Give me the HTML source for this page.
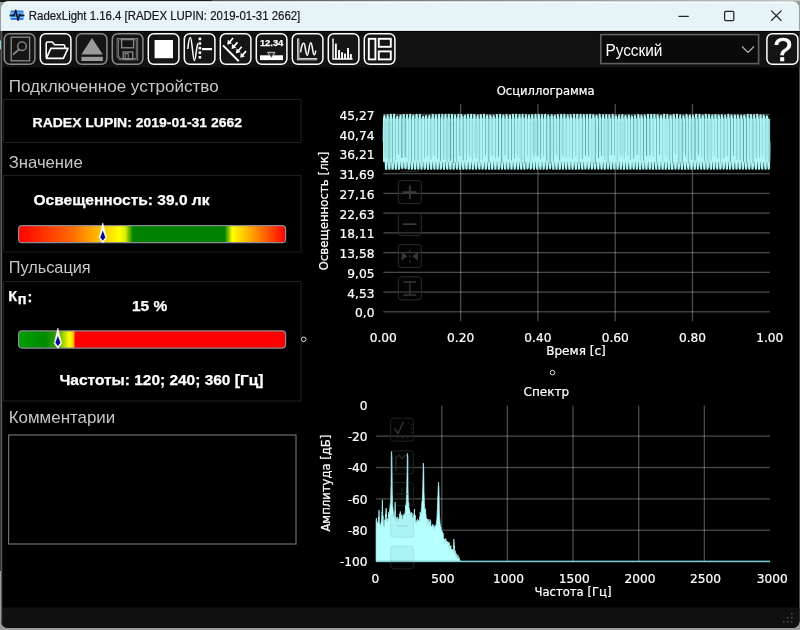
<!DOCTYPE html>
<html lang="ru"><head><meta charset="utf-8"><title>RadexLight 1.16.4 [RADEX LUPIN: 2019-01-31 2662]</title>
<style>
html,body{margin:0;padding:0;width:800px;height:630px;overflow:hidden;background:#9b9b9b}
svg{will-change:transform}
svg text{white-space:pre}
svg text.c{stroke:#fff;stroke-width:0.22px}
svg text[font-weight=bold]{stroke:#fff;stroke-width:0.25px}
</style></head><body>
<svg width="800" height="630" viewBox="0 0 800 630" style="position:absolute;left:0;top:0;display:block">
<rect x="0" y="0" width="800" height="630" fill="#9b9b9b"/>
<linearGradient id="tg" x1="0" x2="1" y1="0" y2="0"><stop offset="0.25" stop-color="#555"/><stop offset="1" stop-color="#c4c4c4"/></linearGradient>
<rect x="0" y="0" width="800" height="1.3" fill="url(#tg)"/>
<rect x="0" y="0" width="212" height="2" fill="#1c1c1c"/>
<rect x="0" y="31" width="2" height="540" fill="#3a3a3a"/>
<rect x="0" y="40.5" width="2" height="9" fill="#7fd6d6"/>
<clipPath id="wc"><rect x="1" y="1.3" width="798.5" height="626.7" rx="7" ry="7"/></clipPath>
<g clip-path="url(#wc)">
<rect x="0" y="0" width="800" height="630" fill="#000"/>
<rect x="0" y="0" width="800" height="31" fill="#e6f4f7"/>
<rect x="0" y="1.4" width="800" height="1.3" fill="#ffffff"/>
<rect x="0" y="29.6" width="800" height="1.2" fill="#ffffff"/>
<rect x="0" y="31" width="800" height="36.5" fill="#111"/>
<rect x="0" y="30.9" width="800" height="1.2" fill="#000"/>
<rect x="0" y="607.5" width="800" height="23" fill="#101010"/>
<rect x="1" y="31" width="1.2" height="597" fill="#5a5a5a"/>
</g>
<g>
<rect x="10.5" y="10.5" width="13" height="9.5" rx="1" fill="#2f7fe6"/>
<rect x="11" y="12.5" width="12" height="1.2" fill="#8fc0ff"/>
<rect x="11" y="16.8" width="12" height="1.2" fill="#8fc0ff"/>
<path d="M9.5 15.5 H14 L15.8 10.2 L18 20.3 L19.8 14.2 L21 15.5 H24.5" fill="none" stroke="#111827" stroke-width="1.5" stroke-linejoin="round"/>
</g>
<text x="28.8" y="20.2" font-size="12" fill="#151515" font-weight="normal" text-anchor="start" font-family='"Liberation Sans", "DejaVu Sans", sans-serif' textLength="271.5" lengthAdjust="spacingAndGlyphs" stroke="#151515" stroke-width="0.2">RadexLight 1.16.4 [RADEX LUPIN: 2019-01-31 2662]</text>
<path d="M678.4 16.4 H688.8" stroke="#222" stroke-width="1.25"/>
<rect x="724.6" y="11.4" width="9.2" height="9.2" rx="1.2" fill="none" stroke="#222" stroke-width="1.25"/>
<path d="M771.2 10.6 L781.4 20.8 M781.4 10.6 L771.2 20.8" stroke="#222" stroke-width="1.25"/>
<rect x="4.3" y="33.7" width="30.6" height="30.6" rx="5.5" fill="#151515" stroke="#8c8c8c" stroke-width="1.5"/>
<rect x="40.300000000000004" y="33.7" width="30.6" height="30.6" rx="5.5" fill="#151515" stroke="#fff" stroke-width="1.5"/>
<rect x="76.3" y="33.7" width="30.6" height="30.6" rx="5.5" fill="#151515" stroke="#8c8c8c" stroke-width="1.5"/>
<rect x="112.3" y="33.7" width="30.6" height="30.6" rx="5.5" fill="#151515" stroke="#8c8c8c" stroke-width="1.5"/>
<rect x="148.29999999999998" y="33.7" width="30.6" height="30.6" rx="5.5" fill="#151515" stroke="#fff" stroke-width="1.5"/>
<rect x="184.29999999999998" y="33.7" width="30.6" height="30.6" rx="5.5" fill="#151515" stroke="#fff" stroke-width="1.5"/>
<rect x="220.29999999999998" y="33.7" width="30.6" height="30.6" rx="5.5" fill="#151515" stroke="#fff" stroke-width="1.5"/>
<rect x="256.3" y="33.7" width="30.6" height="30.6" rx="5.5" fill="#151515" stroke="#fff" stroke-width="1.5"/>
<rect x="292.3" y="33.7" width="30.6" height="30.6" rx="5.5" fill="#151515" stroke="#fff" stroke-width="1.5"/>
<rect x="328.3" y="33.7" width="30.6" height="30.6" rx="5.5" fill="#151515" stroke="#fff" stroke-width="1.5"/>
<rect x="364.3" y="33.7" width="30.6" height="30.6" rx="5.5" fill="#151515" stroke="#fff" stroke-width="1.5"/>
<g transform="translate(3.6,33)">
<rect x="7.6" y="4.2" width="18.4" height="23.6" fill="none" stroke="#8c8c8c" stroke-width="1.3"/>
<circle cx="18.4" cy="13.2" r="4.3" fill="none" stroke="#8c8c8c" stroke-width="1.4"/>
<path d="M15.4 16.4 L10 21.2" stroke="#8c8c8c" stroke-width="1.8" stroke-linecap="round"/>
</g>
<g transform="translate(39.6,33)">
<path d="M6.6 24.5 V10.6 Q6.6 9 8.2 9 H12.6 L15 11.8 H23.6 Q25.2 11.8 25.2 13.4 V15.2" fill="none" stroke="#fff" stroke-width="1.6" stroke-linejoin="round"/>
<path d="M6.8 25.4 L11.2 15.4 H28.4 L23.8 25.4 Z" fill="none" stroke="#fff" stroke-width="1.6" stroke-linejoin="round"/>
</g>
<g transform="translate(75.6,33)">
<path d="M16.4 5 L27.2 21.4 H5.8 Z" fill="#9a9a9a"/>
<rect x="5.8" y="23.8" width="21.4" height="4.2" fill="#9a9a9a"/>
</g>
<g transform="translate(111.6,33)">
<path d="M6.2 6.2 H25.4 V26.2 H8.8 L6.2 23.6 Z" fill="none" stroke="#8c8c8c" stroke-width="2.3" stroke-linejoin="miter"/>
<path d="M6.2 6.2 H25.4 V26.2 H8.8 L6.2 23.6 Z" fill="none" stroke="#151515" stroke-width="0.7"/>
<rect x="10" y="6.2" width="12" height="8.6" fill="none" stroke="#8c8c8c" stroke-width="1.3"/>
<rect x="11.6" y="19" width="9.6" height="7.2" fill="none" stroke="#8c8c8c" stroke-width="1.3"/>
<rect x="13.6" y="20.6" width="3" height="5.6" fill="none" stroke="#8c8c8c" stroke-width="1"/>
</g>
<g transform="translate(147.6,33)">
<rect x="7" y="7" width="18.4" height="18.2" fill="#fff"/>
</g>
<g transform="translate(183.6,33)">
<path d="M4.2 16 C5 8 6 4.4 6.8 4.4 C8.4 4.4 9.2 27.6 10.8 27.6 C12.2 27.6 12.8 12 14.6 10.4" fill="none" stroke="#fff" stroke-width="1.5"/>
<rect x="15" y="4.6" width="2.6" height="2.6" fill="#fff"/>
<rect x="15" y="9.2" width="2.6" height="2.6" fill="#fff"/>
<rect x="15" y="13.8" width="2.6" height="2.6" fill="#fff"/>
<rect x="15" y="18.4" width="2.6" height="2.6" fill="#fff"/>
<rect x="15" y="23" width="2.6" height="2.6" fill="#fff"/>
<rect x="18.4" y="15" width="10" height="2.2" fill="#fff"/>
</g>
<g transform="translate(219.6,33)">
<path d="M3.4 12.4 L19.2 28.2" stroke="#fff" stroke-width="2"/>
<path d="M13.50 5.00 L9.80 9.20" stroke="#fff" stroke-width="1.7"/>
<path d="M7.60 11.70 L8.30 6.70 L12.30 10.30 Z" fill="#fff"/>
<path d="M17.83 9.37 L14.13 13.57" stroke="#fff" stroke-width="1.7"/>
<path d="M11.93 16.07 L12.63 11.07 L16.63 14.67 Z" fill="#fff"/>
<path d="M22.16 13.74 L18.46 17.94" stroke="#fff" stroke-width="1.7"/>
<path d="M16.26 20.44 L16.96 15.44 L20.96 19.04 Z" fill="#fff"/>
<path d="M26.49 18.11 L22.79 22.31" stroke="#fff" stroke-width="1.7"/>
<path d="M20.59 24.81 L21.29 19.81 L25.29 23.41 Z" fill="#fff"/>
</g>
<g transform="translate(255.6,33)">
<text x="16" y="12.9" font-size="9" fill="#fff" font-weight="bold" text-anchor="middle" font-family='"Liberation Sans", "DejaVu Sans", sans-serif' textLength="23.4" lengthAdjust="spacingAndGlyphs">12.34</text>
<rect x="4.4" y="22.3" width="23" height="4.8" fill="#fff"/>
<path d="M12 19.3 H19.4 L15.7 25 Z" fill="#333" stroke="#ddd" stroke-width="0.9"/>
</g>
<g transform="translate(291.6,33)">
<path d="M6.6 5.6 V26.2 H25.6" fill="none" stroke="#fff" stroke-width="2.2"/>
<path d="M6.6 5.6 V26.2 H25.6" fill="none" stroke="#151515" stroke-width="0.6"/>
<path d="M9 19.4 C10 11 11.4 10 12.4 10.4 C13.8 11 14 22.2 15.6 22.2 C17.2 22.2 17.4 9.8 19.2 9.8 C20.8 9.8 21 21.8 22.6 21.8 C23.4 21.8 23.8 19.6 24.2 17.6" fill="none" stroke="#fff" stroke-width="1.5"/>
</g>
<g transform="translate(327.6,33)">
<path d="M5.4 5.4 V26 H25" fill="none" stroke="#fff" stroke-width="1.4"/>
<rect x="7.299999999999999" y="10.6" width="1.9" height="15.4" fill="#fff"/>
<rect x="10.5" y="17" width="1.9" height="9" fill="#fff"/>
<rect x="13.5" y="19.2" width="1.9" height="6.800000000000001" fill="#fff"/>
<rect x="16.5" y="20.6" width="1.9" height="5.399999999999999" fill="#fff"/>
<rect x="19.5" y="15" width="1.9" height="11" fill="#fff"/>
<rect x="22.3" y="21" width="1.9" height="5" fill="#fff"/>
</g>
<g transform="translate(363.6,33)">
<rect x="5.2" y="5.8" width="6.6" height="20.6" fill="none" stroke="#fff" stroke-width="1.9"/>
<rect x="15.2" y="5.8" width="12" height="8" fill="none" stroke="#fff" stroke-width="1.9"/>
<rect x="15.2" y="18.4" width="12" height="8" fill="none" stroke="#fff" stroke-width="1.9"/>
</g>
<rect x="600.8" y="34.6" width="157.8" height="29" fill="#0a0a0a" stroke="#606060" stroke-width="1.6"/>
<text x="605.4" y="56.2" font-size="17" fill="#fff" font-weight="normal" text-anchor="start" font-family='"Liberation Sans", "DejaVu Sans", sans-serif' textLength="57" lengthAdjust="spacingAndGlyphs">Русский</text>
<path d="M742 46.5 L748 52.5 L754 46.5" fill="none" stroke="#b4b4b4" stroke-width="1.2"/>
<rect x="766.9" y="33.7" width="31" height="30.6" rx="5.5" fill="#151515" stroke="#fff" stroke-width="1.5"/>
<text x="782.8" y="61.2" font-size="33.5" fill="#fff" font-weight="normal" text-anchor="middle" font-family='"Liberation Sans", "DejaVu Sans", sans-serif' textLength="18.6" lengthAdjust="spacingAndGlyphs" stroke="#fff" stroke-width="0.7">?</text>
<text x="8.7" y="92.4" font-size="17" fill="#c6c6c6" font-weight="normal" text-anchor="start" font-family='"Liberation Sans", "DejaVu Sans", sans-serif' textLength="210" lengthAdjust="spacingAndGlyphs">Подключенное устройство</text>
<rect x="3.5" y="99.5" width="297.5" height="43" fill="none" stroke="#1f1f1f" stroke-width="1"/>
<text x="32.6" y="126.8" font-size="13.6" fill="#fff" font-weight="bold" text-anchor="start" font-family='"Liberation Sans", "DejaVu Sans", sans-serif' textLength="209.4" lengthAdjust="spacingAndGlyphs">RADEX LUPIN: 2019-01-31 2662</text>
<text x="8.7" y="168.2" font-size="17" fill="#c6c6c6" font-weight="normal" text-anchor="start" font-family='"Liberation Sans", "DejaVu Sans", sans-serif' textLength="74" lengthAdjust="spacingAndGlyphs">Значение</text>
<rect x="3.5" y="175.5" width="297.5" height="76.5" fill="none" stroke="#1f1f1f" stroke-width="1"/>
<text x="33.5" y="205" font-size="14.2" fill="#fff" font-weight="bold" text-anchor="start" font-family='"Liberation Sans", "DejaVu Sans", sans-serif' textLength="176" lengthAdjust="spacingAndGlyphs">Освещенность: 39.0 лк</text>
<text x="8.7" y="273.4" font-size="17" fill="#c6c6c6" font-weight="normal" text-anchor="start" font-family='"Liberation Sans", "DejaVu Sans", sans-serif' textLength="82" lengthAdjust="spacingAndGlyphs">Пульсация</text>
<rect x="3.5" y="281.5" width="297.5" height="119.5" fill="none" stroke="#1f1f1f" stroke-width="1"/>
<text x="8.3" y="301" font-size="14.5" fill="#fff" font-weight="bold" text-anchor="start" font-family='"Liberation Sans", "DejaVu Sans", sans-serif'>К</text>
<text x="17.7" y="304.2" font-size="14.5" fill="#fff" font-weight="bold" text-anchor="start" font-family='"Liberation Sans", "DejaVu Sans", sans-serif'>п</text>
<text x="27.6" y="302.4" font-size="14.5" fill="#fff" font-weight="bold" text-anchor="start" font-family='"Liberation Sans", "DejaVu Sans", sans-serif'>:</text>
<text x="132" y="311" font-size="14.5" fill="#fff" font-weight="bold" text-anchor="start" font-family='"Liberation Sans", "DejaVu Sans", sans-serif' textLength="35.2" lengthAdjust="spacingAndGlyphs">15 %</text>
<text x="59.5" y="384.8" font-size="14.5" fill="#fff" font-weight="bold" text-anchor="start" font-family='"Liberation Sans", "DejaVu Sans", sans-serif' textLength="203.8" lengthAdjust="spacingAndGlyphs">Частоты: 120; 240; 360 [Гц]</text>
<text x="8.7" y="423" font-size="17" fill="#c6c6c6" font-weight="normal" text-anchor="start" font-family='"Liberation Sans", "DejaVu Sans", sans-serif' textLength="106.6" lengthAdjust="spacingAndGlyphs">Комментарии</text>
<rect x="8.6" y="435" width="287.4" height="109" fill="#000" stroke="#6f6f6f" stroke-width="1.2"/>
<defs>
<linearGradient id="g1" x1="0" x2="1" y1="0" y2="0">
<stop offset="0" stop-color="#ff0000"/><stop offset="0.2" stop-color="#ff6a00"/><stop offset="0.378" stop-color="#ffff00"/><stop offset="0.40" stop-color="#d8ee00"/><stop offset="0.428" stop-color="#008200"/>
<stop offset="0.772" stop-color="#008200"/><stop offset="0.80" stop-color="#ffff00"/><stop offset="0.89" stop-color="#ff8c00"/><stop offset="1" stop-color="#ff0000"/>
</linearGradient>
<linearGradient id="g2" x1="0" x2="1" y1="0" y2="0">
<stop offset="0" stop-color="#00a000"/><stop offset="0.1" stop-color="#008a00"/><stop offset="0.14" stop-color="#30a000"/><stop offset="0.19" stop-color="#ffff00"/><stop offset="0.205" stop-color="#ffd000"/><stop offset="0.212" stop-color="#ff0000"/>
<stop offset="1" stop-color="#ff0000"/>
</linearGradient>
</defs>
<rect x="18.6" y="225.7" width="267" height="17" rx="3.5" fill="url(#g1)" stroke="#8c8c96" stroke-width="1.2"/>
<rect x="18.6" y="330.9" width="267" height="17.2" rx="3.5" fill="url(#g2)" stroke="#8c8c96" stroke-width="1.2"/>
<path d="M102.8 223 L106.5 238.0 L102.8 242.8 L99.1 238.0 Z" fill="#fff" stroke="#fff" stroke-width="0.6" stroke-linejoin="round"/>
<path d="M102.8 231.3 L105.1 237.4 L102.8 240.3 L100.5 237.4 Z" fill="#00008b" stroke="#00008b" stroke-width="0.5" stroke-linejoin="round"/>
<path d="M57.9 328.2 L61.6 343.4 L57.9 348.2 L54.199999999999996 343.4 Z" fill="#fff" stroke="#fff" stroke-width="0.6" stroke-linejoin="round"/>
<path d="M57.9 336.6 L60.199999999999996 342.8 L57.9 345.7 L55.6 342.8 Z" fill="#00008b" stroke="#00008b" stroke-width="0.5" stroke-linejoin="round"/>
<circle cx="303.7" cy="339.3" r="2.3" fill="none" stroke="#ddd" stroke-width="1"/>
<circle cx="552.5" cy="372.6" r="2.3" fill="none" stroke="#ddd" stroke-width="1"/>
<rect x="383.3" y="311.15" width="386.49999999999994" height="1.3" fill="#ffffff" fill-opacity="0.29"/>
<text class="c" x="374.4" y="317.2" font-size="12.2" fill="#fff" font-weight="normal" text-anchor="end" font-family='"DejaVu Sans", "Liberation Sans", sans-serif'>0,0</text>
<rect x="383.3" y="291.42" width="386.49999999999994" height="1.3" fill="#ffffff" fill-opacity="0.29"/>
<text class="c" x="374.4" y="297.5" font-size="12.2" fill="#fff" font-weight="normal" text-anchor="end" font-family='"DejaVu Sans", "Liberation Sans", sans-serif'>4,53</text>
<rect x="383.3" y="271.69" width="386.49999999999994" height="1.3" fill="#ffffff" fill-opacity="0.29"/>
<text class="c" x="374.4" y="277.7" font-size="12.2" fill="#fff" font-weight="normal" text-anchor="end" font-family='"DejaVu Sans", "Liberation Sans", sans-serif'>9,05</text>
<rect x="383.3" y="251.96" width="386.49999999999994" height="1.3" fill="#ffffff" fill-opacity="0.29"/>
<text class="c" x="374.4" y="258.0" font-size="12.2" fill="#fff" font-weight="normal" text-anchor="end" font-family='"DejaVu Sans", "Liberation Sans", sans-serif'>13,58</text>
<rect x="383.3" y="232.23" width="386.49999999999994" height="1.3" fill="#ffffff" fill-opacity="0.29"/>
<text class="c" x="374.4" y="238.3" font-size="12.2" fill="#fff" font-weight="normal" text-anchor="end" font-family='"DejaVu Sans", "Liberation Sans", sans-serif'>18,11</text>
<rect x="383.3" y="212.50" width="386.49999999999994" height="1.3" fill="#ffffff" fill-opacity="0.29"/>
<text class="c" x="374.4" y="218.6" font-size="12.2" fill="#fff" font-weight="normal" text-anchor="end" font-family='"DejaVu Sans", "Liberation Sans", sans-serif'>22,63</text>
<rect x="383.3" y="192.77" width="386.49999999999994" height="1.3" fill="#ffffff" fill-opacity="0.29"/>
<text class="c" x="374.4" y="198.8" font-size="12.2" fill="#fff" font-weight="normal" text-anchor="end" font-family='"DejaVu Sans", "Liberation Sans", sans-serif'>27,16</text>
<rect x="383.3" y="173.04" width="386.49999999999994" height="1.3" fill="#ffffff" fill-opacity="0.29"/>
<text class="c" x="374.4" y="179.1" font-size="12.2" fill="#fff" font-weight="normal" text-anchor="end" font-family='"DejaVu Sans", "Liberation Sans", sans-serif'>31,69</text>
<rect x="383.3" y="153.31" width="386.49999999999994" height="1.3" fill="#ffffff" fill-opacity="0.29"/>
<text class="c" x="374.4" y="159.4" font-size="12.2" fill="#fff" font-weight="normal" text-anchor="end" font-family='"DejaVu Sans", "Liberation Sans", sans-serif'>36,21</text>
<rect x="383.3" y="133.58" width="386.49999999999994" height="1.3" fill="#ffffff" fill-opacity="0.29"/>
<text class="c" x="374.4" y="139.6" font-size="12.2" fill="#fff" font-weight="normal" text-anchor="end" font-family='"DejaVu Sans", "Liberation Sans", sans-serif'>40,74</text>
<rect x="383.3" y="113.85" width="386.49999999999994" height="1.3" fill="#ffffff" fill-opacity="0.29"/>
<text class="c" x="374.4" y="119.9" font-size="12.2" fill="#fff" font-weight="normal" text-anchor="end" font-family='"DejaVu Sans", "Liberation Sans", sans-serif'>45,27</text>
<text class="c" x="383.3" y="342.3" font-size="12.2" fill="#fff" font-weight="normal" text-anchor="middle" font-family='"DejaVu Sans", "Liberation Sans", sans-serif'>0.00</text>
<rect x="459.95" y="104" width="1.3" height="217.3" fill="#ffffff" fill-opacity="0.29"/>
<text class="c" x="460.6" y="342.3" font-size="12.2" fill="#fff" font-weight="normal" text-anchor="middle" font-family='"DejaVu Sans", "Liberation Sans", sans-serif'>0.20</text>
<rect x="537.25" y="104" width="1.3" height="217.3" fill="#ffffff" fill-opacity="0.29"/>
<text class="c" x="537.9" y="342.3" font-size="12.2" fill="#fff" font-weight="normal" text-anchor="middle" font-family='"DejaVu Sans", "Liberation Sans", sans-serif'>0.40</text>
<rect x="614.55" y="104" width="1.3" height="217.3" fill="#ffffff" fill-opacity="0.29"/>
<text class="c" x="615.2" y="342.3" font-size="12.2" fill="#fff" font-weight="normal" text-anchor="middle" font-family='"DejaVu Sans", "Liberation Sans", sans-serif'>0.60</text>
<rect x="691.85" y="104" width="1.3" height="217.3" fill="#ffffff" fill-opacity="0.29"/>
<text class="c" x="692.5" y="342.3" font-size="12.2" fill="#fff" font-weight="normal" text-anchor="middle" font-family='"DejaVu Sans", "Liberation Sans", sans-serif'>0.80</text>
<text class="c" x="769.8" y="342.3" font-size="12.2" fill="#fff" font-weight="normal" text-anchor="middle" font-family='"DejaVu Sans", "Liberation Sans", sans-serif'>1.00</text>
<text class="c" x="545.7" y="95" font-size="12.2" fill="#fff" font-weight="normal" text-anchor="middle" font-family='"DejaVu Sans", "Liberation Sans", sans-serif' textLength="98" lengthAdjust="spacingAndGlyphs">Осциллограмма</text>
<text class="c" x="576" y="354.6" font-size="12.2" fill="#fff" font-weight="normal" text-anchor="middle" font-family='"DejaVu Sans", "Liberation Sans", sans-serif' textLength="59.6" lengthAdjust="spacingAndGlyphs">Время [с]</text>
<text class="c" transform="translate(328.4 211) rotate(-90)" font-size="12.2" fill="#fff" text-anchor="middle" font-family='"DejaVu Sans", "Liberation Sans", sans-serif' textLength="118.8" lengthAdjust="spacingAndGlyphs">Освещенность [лк]</text>
<rect x="383.0" y="118.73" width="387.09999999999997" height="43.15" fill="#aef6f6"/>
<polyline points="383.70,141.67 383.81,127.63 383.91,121.80 384.02,120.40 384.13,117.29 384.24,116.61 384.34,116.89 384.45,115.69 384.56,117.30 384.66,116.97 384.77,118.94 384.88,120.25 384.99,121.19 385.09,122.68 385.20,128.43 385.31,141.93 385.41,154.75 385.52,158.13 385.63,162.07 385.74,164.88 385.84,165.21 385.95,168.85 386.06,167.83 386.16,168.85 386.27,168.85 386.38,168.85 386.49,166.89 386.59,163.16 386.70,161.47 386.81,155.60 386.91,140.85 387.02,127.05 387.13,122.07 387.24,120.43 387.34,118.54 387.45,117.03 387.56,115.27 387.66,115.90 387.77,116.57 387.88,116.57 387.99,117.94 388.09,119.70 388.20,120.23 388.31,123.01 388.41,128.12 388.52,141.02 388.63,155.02 388.74,158.32 388.84,161.68 388.95,165.16 389.06,165.20 389.16,168.85 389.27,168.85 389.38,168.47 389.49,168.85 389.59,168.04 389.70,167.60 389.81,163.55 389.91,159.94 390.02,155.62 390.13,140.23 390.24,127.20 390.34,121.68 390.45,119.04 390.56,117.18 390.66,116.37 390.77,114.85 390.88,114.81 390.99,116.16 391.09,116.37 391.20,118.96 391.31,118.65 391.41,120.61 391.52,122.24 391.63,126.60 391.74,141.77 391.84,155.38 391.95,158.86 392.06,163.52 392.16,164.71 392.27,167.32 392.38,168.85 392.49,168.85 392.59,168.44 392.70,168.85 392.81,168.67 392.91,166.68 393.02,163.02 393.13,161.73 393.24,155.95 393.34,141.08 393.45,125.71 393.56,121.36 393.66,118.33 393.77,117.97 393.88,116.48 393.99,116.11 394.09,114.81 394.20,114.89 394.31,117.71 394.41,118.66 394.52,119.88 394.63,121.69 394.74,123.57 394.84,127.21 394.95,141.83 395.06,156.38 395.16,159.51 395.27,162.62 395.38,164.43 395.49,165.27 395.59,167.35 395.70,168.73 395.81,168.83 395.91,168.45 396.02,168.85 396.13,165.35 396.24,163.25 396.34,159.65 396.45,155.04 396.56,141.49 396.66,126.98 396.77,123.23 396.88,118.94 396.99,118.53 397.09,117.39 397.20,116.50 397.31,116.60 397.41,116.51 397.52,117.97 397.63,119.12 397.74,120.09 397.84,122.04 397.95,123.89 398.06,128.69 398.16,140.23 398.27,154.78 398.38,160.22 398.49,162.92 398.59,165.00 398.70,166.81 398.81,168.84 398.91,167.86 399.02,167.85 399.13,168.85 399.24,168.05 399.34,167.48 399.45,165.03 399.56,161.05 399.66,156.43 399.77,140.35 399.88,127.60 399.99,123.44 400.09,118.11 400.20,117.31 400.31,117.18 400.41,115.63 400.52,116.95 400.63,116.01 400.74,115.54 400.84,116.86 400.95,118.66 401.06,121.62 401.16,123.88 401.27,128.32 401.38,140.50 401.49,155.00 401.59,158.57 401.70,162.72 401.81,165.33 401.91,165.64 402.02,166.58 402.13,167.85 402.24,168.34 402.34,168.08 402.45,167.38 402.56,167.11 402.66,163.94 402.77,161.01 402.88,157.05 402.99,142.45 403.09,127.29 403.20,122.83 403.31,118.78 403.41,116.19 403.52,116.39 403.63,114.81 403.73,114.81 403.84,114.90 403.95,117.15 404.06,118.54 404.16,119.89 404.27,121.79 404.38,124.30 404.48,127.12 404.59,140.16 404.70,154.19 404.81,159.35 404.91,161.88 405.02,163.82 405.13,167.54 405.23,167.43 405.34,167.70 405.45,168.40 405.56,168.26 405.66,168.07 405.77,167.23 405.88,163.23 405.98,161.07 406.09,155.03 406.20,139.98 406.31,126.99 406.41,122.45 406.52,118.12 406.63,116.80 406.73,117.12 406.84,116.71 406.95,116.63 407.06,115.03 407.16,115.99 407.27,118.74 407.38,118.32 407.48,119.74 407.59,123.12 407.70,127.84 407.81,141.08 407.91,156.05 408.02,160.57 408.13,161.04 408.23,164.21 408.34,166.38 408.45,166.72 408.56,168.85 408.66,168.17 408.77,168.06 408.88,168.77 408.98,167.04 409.09,164.53 409.20,161.31 409.31,155.59 409.41,141.84 409.52,126.93 409.63,123.16 409.73,118.21 409.84,117.77 409.95,116.37 410.06,115.52 410.16,114.81 410.27,116.30 410.38,115.70 410.48,117.81 410.59,119.09 410.70,120.94 410.81,124.79 410.91,127.60 411.02,142.04 411.13,156.38 411.23,158.52 411.34,163.13 411.45,164.67 411.56,165.87 411.66,167.71 411.77,168.85 411.88,168.85 411.98,168.77 412.09,167.27 412.20,167.42 412.31,163.83 412.41,161.29 412.52,156.40 412.63,140.50 412.73,126.69 412.84,122.03 412.95,118.61 413.06,116.31 413.16,116.40 413.27,115.44 413.38,115.70 413.48,116.06 413.59,116.29 413.70,117.94 413.81,119.09 413.91,121.05 414.02,122.38 414.13,126.93 414.23,140.23 414.34,153.93 414.45,159.93 414.56,162.12 414.66,163.45 414.77,165.57 414.88,168.80 414.98,168.85 415.09,168.85 415.20,168.85 415.31,168.69 415.41,167.51 415.52,163.54 415.63,159.89 415.73,154.78 415.84,142.11 415.95,126.15 416.06,121.78 416.16,120.22 416.27,116.39 416.38,115.03 416.48,116.47 416.59,114.81 416.70,116.35 416.81,116.83 416.91,116.53 417.02,118.31 417.13,121.88 417.23,123.71 417.34,127.41 417.45,141.63 417.56,155.88 417.66,159.77 417.77,161.70 417.88,165.86 417.98,166.31 418.09,168.01 418.20,168.85 418.31,168.85 418.41,168.59 418.52,167.98 418.63,167.53 418.73,162.72 418.84,159.88 418.95,154.58 419.06,142.24 419.16,127.33 419.27,123.40 419.38,118.56 419.48,117.99 419.59,117.22 419.70,115.94 419.81,114.81 419.91,115.25 420.02,117.43 420.13,118.73 420.23,118.08 420.34,120.81 420.45,123.01 420.56,128.52 420.66,142.37 420.77,154.59 420.88,159.49 420.98,163.39 421.09,163.46 421.20,166.10 421.31,167.06 421.41,168.85 421.52,168.21 421.63,168.85 421.73,167.06 421.84,166.51 421.95,164.41 422.06,160.50 422.16,154.70 422.27,141.82 422.38,127.68 422.48,122.12 422.59,119.97 422.70,118.41 422.81,117.14 422.91,116.91 423.02,116.49 423.13,116.58 423.23,117.31 423.34,117.14 423.45,119.73 423.56,121.00 423.66,124.37 423.77,127.85 423.88,142.47 423.98,155.74 424.09,160.57 424.20,161.67 424.31,164.47 424.41,167.27 424.52,167.92 424.63,167.63 424.73,168.85 424.84,168.08 424.95,168.19 425.06,166.41 425.16,163.11 425.27,160.91 425.38,155.80 425.48,140.72 425.59,125.45 425.70,122.61 425.81,118.42 425.91,116.85 426.02,115.90 426.13,115.99 426.23,116.11 426.34,117.25 426.45,117.76 426.56,118.94 426.66,118.55 426.77,121.64 426.88,124.41 426.98,128.53 427.09,140.32 427.20,154.11 427.31,158.85 427.41,162.85 427.52,165.28 427.63,167.00 427.73,167.96 427.84,168.85 427.95,168.85 428.06,168.85 428.16,166.80 428.27,165.16 428.38,163.86 428.48,161.30 428.59,154.60 428.70,141.71 428.81,127.09 428.91,123.50 429.02,119.60 429.13,117.45 429.23,116.25 429.34,116.52 429.45,115.70 429.56,117.38 429.66,117.41 429.77,118.89 429.88,119.44 429.98,122.20 430.09,124.78 430.20,127.96 430.31,141.91 430.41,154.86 430.52,159.22 430.63,161.62 430.73,164.19 430.84,165.89 430.95,166.86 431.06,168.85 431.16,168.85 431.27,167.64 431.38,168.85 431.48,165.81 431.59,163.61 431.70,161.83 431.81,154.94 431.91,140.19 432.02,126.38 432.13,121.58 432.23,118.47 432.34,118.33 432.45,116.19 432.56,115.73 432.66,114.84 432.77,115.29 432.88,115.94 432.98,117.59 433.09,118.15 433.20,120.52 433.31,123.03 433.41,128.15 433.52,142.44 433.63,156.04 433.73,159.66 433.84,163.31 433.95,163.73 434.06,166.30 434.16,167.52 434.27,168.44 434.38,168.67 434.48,168.85 434.59,168.85 434.70,165.62 434.81,163.34 434.91,160.63 435.02,155.72 435.13,140.79 435.23,127.85 435.34,121.58 435.45,119.93 435.56,118.50 435.66,116.87 435.77,115.14 435.88,116.48 435.98,115.46 436.09,115.55 436.20,117.83 436.31,119.48 436.41,121.05 436.52,123.05 436.63,126.75 436.73,140.91 436.84,154.71 436.95,160.40 437.06,163.20 437.16,165.25 437.27,165.82 437.38,168.36 437.48,168.59 437.59,168.85 437.70,168.85 437.81,168.62 437.91,165.94 438.02,163.48 438.13,160.17 438.23,156.36 438.34,141.17 438.45,126.81 438.56,122.28 438.66,120.28 438.77,116.36 438.88,117.04 438.98,114.81 439.09,114.81 439.20,117.35 439.31,116.90 439.41,116.98 439.52,117.95 439.63,121.13 439.73,124.14 439.84,128.21 439.95,140.05 440.06,155.84 440.16,159.08 440.27,163.21 440.38,164.54 440.48,165.27 440.59,168.81 440.70,167.93 440.81,168.85 440.91,167.90 441.02,167.48 441.13,167.10 441.23,162.95 441.34,160.67 441.45,157.06 441.55,142.51 441.66,126.74 441.77,122.32 441.88,119.80 441.98,118.33 442.09,116.66 442.20,116.22 442.30,114.82 442.41,117.39 442.52,116.14 442.63,116.93 442.73,120.17 442.84,119.88 442.95,122.97 443.05,126.40 443.16,141.76 443.27,155.42 443.38,159.58 443.48,160.97 443.59,164.37 443.70,166.82 443.80,168.04 443.91,168.85 444.02,168.85 444.13,168.85 444.23,167.14 444.34,166.95 444.45,162.85 444.55,161.29 444.66,156.43 444.77,141.18 444.88,127.53 444.98,122.53 445.09,118.09 445.20,116.38 445.30,115.44 445.41,115.40 445.52,114.81 445.63,114.94 445.73,116.67 445.84,117.24 445.95,120.35 446.05,120.39 446.16,123.66 446.27,126.79 446.38,140.83 446.48,155.64 446.59,160.48 446.70,161.16 446.80,165.58 446.91,166.53 447.02,168.26 447.13,168.85 447.23,168.52 447.34,167.66 447.45,168.64 447.55,165.99 447.66,164.51 447.77,160.48 447.88,156.09 447.98,142.08 448.09,127.60 448.20,122.96 448.30,118.22 448.41,117.40 448.52,116.99 448.63,114.81 448.73,114.81 448.84,116.22 448.95,117.74 449.05,118.62 449.16,120.25 449.27,121.41 449.38,124.60 449.48,128.13 449.59,141.84 449.70,154.90 449.80,158.29 449.91,161.62 450.02,164.83 450.13,166.68 450.23,167.79 450.34,168.85 450.45,168.85 450.55,168.85 450.66,168.59 450.77,165.17 450.88,164.96 450.98,160.63 451.09,155.48 451.20,140.26 451.30,127.46 451.41,122.79 451.52,119.94 451.63,117.65 451.73,116.40 451.84,114.81 451.95,114.81 452.05,115.11 452.16,118.05 452.27,119.04 452.38,118.63 452.48,119.96 452.59,123.60 452.70,127.22 452.80,142.52 452.91,155.37 453.02,158.18 453.13,161.42 453.23,163.68 453.34,165.22 453.45,168.51 453.55,168.85 453.66,168.85 453.77,168.85 453.88,167.54 453.98,165.24 454.09,163.41 454.20,160.25 454.30,155.12 454.41,141.32 454.52,126.58 454.63,123.40 454.73,118.55 454.84,118.09 454.95,115.16 455.05,115.36 455.16,116.23 455.27,117.06 455.38,117.44 455.48,117.46 455.59,118.66 455.70,122.01 455.80,124.66 455.91,127.38 456.02,140.99 456.13,155.38 456.23,160.02 456.34,162.01 456.45,165.89 456.55,166.97 456.66,167.96 456.77,167.57 456.88,168.76 456.98,167.91 457.09,168.08 457.20,167.09 457.30,164.65 457.41,159.43 457.52,155.28 457.63,141.72 457.73,127.97 457.84,122.20 457.95,118.83 458.05,117.60 458.16,116.89 458.27,115.30 458.38,114.81 458.48,116.80 458.59,118.01 458.70,118.24 458.80,119.38 458.91,120.52 459.02,124.32 459.13,126.67 459.23,140.59 459.34,155.07 459.45,160.07 459.55,161.05 459.66,165.10 459.77,165.62 459.88,168.56 459.98,168.85 460.09,168.46 460.20,168.85 460.30,166.83 460.41,166.41 460.52,164.80 460.63,161.36 460.73,156.03 460.84,140.78 460.95,125.54 461.05,123.12 461.16,119.56 461.27,118.14 461.38,115.02 461.48,116.67 461.59,116.89 461.70,117.24 461.80,117.07 461.91,116.77 462.02,118.17 462.13,120.39 462.23,122.23 462.34,126.32 462.45,141.66 462.55,155.91 462.66,158.16 462.77,161.63 462.88,165.83 462.98,166.02 463.09,168.17 463.20,168.85 463.30,168.85 463.41,168.85 463.52,168.85 463.63,166.97 463.73,164.37 463.84,159.44 463.95,156.80 464.05,140.00 464.16,127.48 464.27,122.57 464.38,118.45 464.48,116.55 464.59,116.43 464.70,116.92 464.80,115.78 464.91,116.42 465.02,115.70 465.13,118.62 465.23,119.53 465.34,119.96 465.45,124.76 465.55,127.68 465.66,140.40 465.77,154.39 465.88,160.50 465.98,163.49 466.09,165.75 466.20,165.36 466.30,168.49 466.41,168.12 466.52,168.10 466.63,168.85 466.73,168.61 466.84,165.20 466.95,163.68 467.05,161.26 467.16,155.25 467.27,141.69 467.38,127.30 467.48,123.49 467.59,118.62 467.70,116.30 467.80,115.91 467.91,114.81 468.02,116.96 468.13,116.78 468.23,116.86 468.34,116.62 468.45,117.99 468.55,121.29 468.66,124.18 468.77,127.63 468.88,141.23 468.98,153.96 469.09,160.13 469.20,161.48 469.30,163.98 469.41,165.61 469.52,167.14 469.63,168.49 469.73,168.85 469.84,168.85 469.95,168.37 470.05,165.66 470.16,165.09 470.27,161.43 470.38,155.15 470.48,141.87 470.59,127.85 470.70,123.41 470.80,119.15 470.91,117.84 471.02,115.00 471.13,114.81 471.23,114.81 471.34,116.70 471.45,117.88 471.55,118.87 471.66,119.18 471.77,120.45 471.88,123.67 471.98,128.14 472.09,141.43 472.20,154.77 472.30,158.84 472.41,161.63 472.52,163.70 472.63,166.02 472.73,168.84 472.84,167.88 472.95,168.85 473.05,168.74 473.16,168.34 473.27,165.77 473.38,164.77 473.48,161.29 473.59,156.48 473.70,142.12 473.80,125.71 473.91,121.99 474.02,119.74 474.13,117.66 474.23,114.97 474.34,115.72 474.45,116.42 474.55,115.28 474.66,116.39 474.77,116.53 474.88,120.22 474.98,121.06 475.09,122.70 475.20,126.56 475.30,140.13 475.41,156.28 475.52,159.84 475.63,163.27 475.73,165.42 475.84,165.22 475.95,167.64 476.05,167.64 476.16,168.85 476.27,167.95 476.38,168.15 476.48,167.02 476.59,163.26 476.70,159.47 476.80,156.85 476.91,140.96 477.02,126.40 477.13,122.93 477.23,119.63 477.34,118.33 477.45,117.03 477.55,116.38 477.66,115.45 477.77,115.69 477.88,117.57 477.98,119.09 478.09,119.63 478.20,120.53 478.30,124.36 478.41,127.94 478.52,141.99 478.63,154.31 478.73,159.17 478.84,163.42 478.95,165.65 479.05,166.73 479.16,167.72 479.27,168.40 479.38,168.85 479.48,168.85 479.59,167.50 479.70,166.63 479.80,164.55 479.91,161.14 480.02,154.63 480.12,141.70 480.23,126.54 480.34,122.57 480.45,119.50 480.55,116.44 480.66,114.96 480.77,116.09 480.87,116.51 480.98,115.49 481.09,117.57 481.20,119.11 481.30,118.13 481.41,121.20 481.52,122.69 481.62,127.69 481.73,140.21 481.84,155.18 481.95,160.18 482.05,163.54 482.16,164.47 482.27,166.09 482.37,166.78 482.48,168.85 482.59,168.82 482.70,168.85 482.80,168.00 482.91,167.32 483.02,164.55 483.12,160.58 483.23,154.70 483.34,142.23 483.45,126.74 483.55,121.40 483.66,118.07 483.77,118.18 483.87,117.23 483.98,114.81 484.09,114.81 484.20,116.13 484.30,117.96 484.41,116.70 484.52,119.47 484.62,119.94 484.73,123.22 484.84,126.60 484.95,142.10 485.05,154.34 485.16,160.02 485.27,162.53 485.37,163.70 485.48,165.59 485.59,168.68 485.70,168.85 485.80,168.85 485.91,168.85 486.02,168.32 486.12,167.38 486.23,164.65 486.34,160.05 486.45,154.78 486.55,142.41 486.66,126.55 486.77,121.52 486.87,120.49 486.98,116.50 487.09,117.26 487.20,115.48 487.30,115.58 487.41,115.76 487.52,117.30 487.62,118.02 487.73,118.96 487.84,121.19 487.95,123.12 488.05,127.59 488.16,141.37 488.27,156.33 488.37,158.99 488.48,162.30 488.59,165.30 488.70,165.77 488.80,167.12 488.91,168.85 489.02,168.85 489.12,168.85 489.23,168.85 489.34,167.37 489.45,164.17 489.55,161.70 489.66,155.97 489.77,141.18 489.87,127.92 489.98,121.84 490.09,120.38 490.20,116.78 490.30,115.53 490.41,115.71 490.52,116.88 490.62,116.08 490.73,117.11 490.84,116.63 490.95,120.13 491.05,120.06 491.16,122.23 491.27,126.84 491.37,140.39 491.48,155.88 491.59,158.04 491.70,162.30 491.80,163.41 491.91,165.37 492.02,168.73 492.12,168.01 492.23,168.02 492.34,168.85 492.45,168.40 492.55,165.72 492.66,164.88 492.77,159.60 492.87,156.40 492.98,140.39 493.09,127.65 493.20,122.19 493.30,118.19 493.41,118.15 493.52,116.88 493.62,115.72 493.73,116.19 493.84,117.30 493.95,117.63 494.05,118.70 494.16,118.04 494.27,120.53 494.37,122.50 494.48,128.31 494.59,140.47 494.70,156.09 494.80,159.22 494.91,161.92 495.02,164.97 495.12,165.48 495.23,167.71 495.34,168.56 495.45,168.14 495.55,168.85 495.66,166.72 495.77,166.05 495.87,164.26 495.98,159.86 496.09,156.43 496.20,139.93 496.30,126.51 496.41,122.56 496.52,118.59 496.62,117.54 496.73,117.10 496.84,115.10 496.95,116.90 497.05,115.25 497.16,117.44 497.27,117.45 497.37,117.91 497.48,120.77 497.59,123.10 497.70,127.94 497.80,142.51 497.91,156.30 498.02,160.21 498.12,161.97 498.23,164.78 498.34,166.42 498.45,166.82 498.55,168.85 498.66,168.85 498.77,168.51 498.87,168.85 498.98,167.69 499.09,164.37 499.20,161.66 499.30,156.19 499.41,141.93 499.52,126.50 499.62,121.96 499.73,120.06 499.84,117.06 499.95,116.32 500.05,116.69 500.16,114.81 500.27,116.76 500.37,117.71 500.48,118.87 500.59,118.81 500.70,120.03 500.80,122.79 500.91,127.70 501.02,141.83 501.12,156.36 501.23,158.92 501.34,162.11 501.45,165.00 501.55,166.07 501.66,168.00 501.77,167.63 501.87,168.53 501.98,168.85 502.09,166.96 502.20,167.59 502.30,163.90 502.41,160.88 502.52,156.50 502.62,142.37 502.73,125.99 502.84,123.47 502.95,119.15 503.05,116.23 503.16,117.19 503.27,116.52 503.37,115.43 503.48,116.07 503.59,116.43 503.70,116.99 503.80,120.03 503.91,121.50 504.02,124.05 504.12,128.63 504.23,140.19 504.34,154.34 504.45,158.73 504.55,163.57 504.66,163.70 504.77,165.81 504.87,167.94 504.98,168.14 505.09,168.85 505.20,168.85 505.30,168.85 505.41,167.09 505.52,165.19 505.62,161.06 505.73,155.16 505.84,140.70 505.95,125.81 506.05,121.64 506.16,119.90 506.27,117.25 506.37,116.42 506.48,114.98 506.59,115.65 506.70,116.70 506.80,116.42 506.91,116.60 507.02,119.92 507.12,120.00 507.23,124.80 507.34,128.07 507.45,141.90 507.55,154.44 507.66,158.13 507.77,161.63 507.87,165.06 507.98,165.46 508.09,168.30 508.20,168.85 508.30,168.08 508.41,168.57 508.52,167.51 508.62,165.96 508.73,162.73 508.84,160.71 508.95,154.93 509.05,140.69 509.16,125.78 509.27,122.36 509.37,118.70 509.48,117.20 509.59,116.76 509.70,116.49 509.80,115.39 509.91,117.19 510.02,115.72 510.12,118.74 510.23,120.41 510.34,122.03 510.45,122.41 510.55,127.85 510.66,142.15 510.77,156.32 510.87,160.50 510.98,161.77 511.09,164.26 511.20,165.94 511.30,167.23 511.41,168.85 511.52,168.85 511.62,168.85 511.73,167.18 511.84,165.56 511.95,162.96 512.05,161.77 512.16,154.85 512.27,140.13 512.37,125.55 512.48,123.22 512.59,120.06 512.70,118.40 512.80,117.47 512.91,114.83 513.02,114.90 513.12,115.74 513.23,115.95 513.34,117.47 513.45,119.73 513.55,122.04 513.66,124.58 513.77,126.77 513.87,141.98 513.98,155.56 514.09,159.50 514.20,163.53 514.30,165.24 514.41,167.02 514.52,167.29 514.62,168.85 514.73,168.85 514.84,167.70 514.95,168.00 515.05,165.48 515.16,163.68 515.27,161.86 515.37,156.04 515.48,141.38 515.59,126.00 515.70,122.60 515.80,118.75 515.91,117.29 516.02,117.00 516.12,114.81 516.23,116.78 516.34,115.25 516.45,117.66 516.55,119.12 516.66,119.96 516.77,120.31 516.87,122.28 516.98,128.74 517.09,141.24 517.20,155.10 517.30,158.52 517.41,163.10 517.52,164.62 517.62,166.85 517.73,166.99 517.84,168.85 517.95,167.98 518.05,168.85 518.16,168.76 518.27,165.87 518.37,163.99 518.48,161.65 518.59,155.46 518.69,142.31 518.80,125.96 518.91,121.68 519.02,118.54 519.12,117.05 519.23,116.63 519.34,116.00 519.44,115.99 519.55,115.07 519.66,117.88 519.77,116.80 519.87,120.42 519.98,121.77 520.09,124.15 520.19,126.40 520.30,141.21 520.41,155.40 520.52,158.29 520.62,162.97 520.73,164.71 520.84,166.37 520.94,167.19 521.05,168.11 521.16,168.76 521.27,168.85 521.37,168.47 521.48,167.30 521.59,163.09 521.69,160.21 521.80,155.18 521.91,142.08 522.02,126.87 522.12,121.48 522.23,119.08 522.34,118.37 522.44,116.36 522.55,114.81 522.66,116.40 522.77,116.89 522.87,117.31 522.98,117.28 523.09,118.28 523.19,121.90 523.30,124.43 523.41,128.11 523.52,141.66 523.62,155.02 523.73,160.18 523.84,162.73 523.94,165.42 524.05,165.21 524.16,167.25 524.27,168.85 524.37,167.93 524.48,168.85 524.59,168.31 524.69,165.13 524.80,163.22 524.91,160.02 525.02,155.98 525.12,142.01 525.23,126.35 525.34,123.22 525.44,120.05 525.55,117.68 525.66,117.47 525.77,116.00 525.87,114.95 525.98,115.58 526.09,116.79 526.19,117.47 526.30,119.27 526.41,121.93 526.52,123.26 526.62,127.70 526.73,140.58 526.84,154.02 526.94,159.48 527.05,162.08 527.16,163.95 527.27,166.66 527.37,168.56 527.48,168.19 527.59,168.15 527.69,168.19 527.80,167.49 527.91,165.47 528.02,163.52 528.12,160.26 528.23,155.93 528.34,141.70 528.44,126.38 528.55,123.25 528.66,119.50 528.77,116.65 528.87,115.70 528.98,115.40 529.09,116.37 529.19,116.29 529.30,116.91 529.41,117.50 529.52,119.41 529.62,120.54 529.73,122.41 529.84,128.28 529.94,140.81 530.05,154.36 530.16,159.59 530.27,162.30 530.37,163.36 530.48,167.66 530.59,167.74 530.69,168.85 530.80,168.41 530.91,167.76 531.02,167.96 531.12,167.44 531.23,163.79 531.34,160.53 531.44,155.25 531.55,141.18 531.66,126.35 531.77,121.34 531.87,119.23 531.98,117.62 532.09,115.08 532.19,116.50 532.30,115.23 532.41,116.37 532.52,116.11 532.62,118.80 532.73,117.91 532.84,121.37 532.94,124.69 533.05,128.04 533.16,141.47 533.27,156.36 533.37,159.51 533.48,162.48 533.59,164.09 533.69,166.84 533.80,168.47 533.91,168.85 534.02,168.51 534.12,167.76 534.23,167.94 534.34,167.13 534.44,163.20 534.55,160.92 534.66,156.57 534.77,142.18 534.87,125.99 534.98,121.39 535.09,118.94 535.19,117.47 535.30,116.09 535.41,116.45 535.52,114.81 535.62,116.47 535.73,116.43 535.84,116.98 535.94,118.35 536.05,121.08 536.16,124.07 536.27,127.32 536.37,142.19 536.48,154.21 536.59,159.68 536.69,161.36 536.80,165.21 536.91,166.78 537.02,168.50 537.12,168.85 537.23,168.85 537.34,168.85 537.44,167.43 537.55,166.97 537.66,164.65 537.77,161.15 537.87,155.87 537.98,141.40 538.09,126.36 538.19,121.78 538.30,119.65 538.41,116.27 538.52,115.33 538.62,116.90 538.73,114.86 538.84,115.03 538.94,116.05 539.05,118.75 539.16,118.31 539.27,120.65 539.37,124.80 539.48,128.72 539.59,140.03 539.69,154.67 539.80,159.95 539.91,163.32 540.02,165.54 540.12,167.15 540.23,167.13 540.34,168.85 540.44,168.85 540.55,167.85 540.66,167.25 540.77,167.26 540.87,162.96 540.98,160.35 541.09,155.08 541.19,140.77 541.30,125.68 541.41,121.44 541.52,118.40 541.62,118.18 541.73,115.75 541.84,115.66 541.94,115.08 542.05,116.25 542.16,115.79 542.27,117.67 542.37,119.79 542.48,121.69 542.59,124.48 542.69,127.46 542.80,142.37 542.91,155.17 543.02,160.23 543.12,162.30 543.23,164.61 543.34,166.35 543.44,166.90 543.55,168.85 543.66,168.25 543.77,168.85 543.87,167.85 543.98,165.96 544.09,163.10 544.19,160.96 544.30,156.03 544.41,140.01 544.52,127.83 544.62,121.84 544.73,118.93 544.84,118.62 544.94,115.97 545.05,115.26 545.16,114.81 545.27,116.53 545.37,115.54 545.48,117.79 545.59,119.22 545.69,119.96 545.80,124.75 545.91,126.88 546.02,140.88 546.12,155.50 546.23,158.35 546.34,162.63 546.44,164.67 546.55,166.39 546.66,167.15 546.77,168.85 546.87,168.85 546.98,168.85 547.09,167.87 547.19,165.54 547.30,164.53 547.41,159.78 547.52,156.07 547.62,141.20 547.73,127.31 547.84,122.18 547.94,118.04 548.05,116.98 548.16,115.49 548.27,116.18 548.37,116.19 548.48,116.61 548.59,116.57 548.69,117.46 548.80,118.43 548.91,122.20 549.02,122.95 549.12,126.44 549.23,141.09 549.34,156.26 549.44,159.82 549.55,163.57 549.66,165.42 549.77,165.35 549.87,167.57 549.98,168.36 550.09,168.39 550.19,167.84 550.30,167.72 550.41,166.09 550.52,163.65 550.62,160.12 550.73,155.56 550.84,140.74 550.94,127.47 551.05,121.76 551.16,119.40 551.27,116.70 551.37,117.30 551.48,116.57 551.59,116.92 551.69,115.37 551.80,115.71 551.91,117.41 552.02,119.52 552.12,120.15 552.23,122.78 552.34,127.28 552.44,141.84 552.55,155.60 552.66,159.50 552.77,162.75 552.87,164.79 552.98,166.08 553.09,166.72 553.19,168.85 553.30,168.85 553.41,168.85 553.52,168.85 553.62,165.58 553.73,163.79 553.84,159.54 553.94,155.95 554.05,142.48 554.16,127.01 554.27,121.95 554.37,118.14 554.48,116.13 554.59,116.32 554.69,115.97 554.80,116.75 554.91,115.71 555.02,117.55 555.12,118.72 555.23,120.44 555.34,122.29 555.44,123.05 555.55,128.44 555.66,139.99 555.77,156.16 555.87,158.33 555.98,163.25 556.09,165.87 556.19,165.88 556.30,168.53 556.41,168.16 556.52,168.85 556.62,168.85 556.73,167.30 556.84,165.84 556.94,163.06 557.05,160.03 557.16,156.90 557.26,140.88 557.37,126.17 557.48,122.30 557.59,118.16 557.69,118.03 557.80,115.04 557.91,115.17 558.01,116.99 558.12,117.36 558.23,116.40 558.34,116.98 558.44,120.28 558.55,121.49 558.66,122.93 558.76,128.32 558.87,140.27 558.98,155.12 559.09,160.45 559.19,162.62 559.30,164.41 559.41,166.61 559.51,167.39 559.62,168.85 559.73,168.36 559.84,168.85 559.94,167.63 560.05,166.05 560.16,164.20 560.26,160.93 560.37,155.07 560.48,140.05 560.59,125.97 560.69,122.02 560.80,119.83 560.91,118.54 561.01,115.02 561.12,115.21 561.23,114.86 561.34,116.53 561.44,116.52 561.55,116.57 561.66,118.31 561.76,120.73 561.87,124.03 561.98,127.63 562.09,140.20 562.19,155.41 562.30,158.81 562.41,162.01 562.51,163.57 562.62,165.65 562.73,168.42 562.84,168.85 562.94,168.85 563.05,168.85 563.16,167.79 563.26,165.57 563.37,162.97 563.48,161.83 563.59,154.94 563.69,140.40 563.80,125.75 563.91,122.01 564.01,119.88 564.12,116.47 564.23,115.45 564.34,115.26 564.44,114.81 564.55,116.49 564.66,117.88 564.76,117.67 564.87,118.40 564.98,121.78 565.09,122.88 565.19,126.32 565.30,141.91 565.41,154.80 565.51,158.83 565.62,162.37 565.73,165.37 565.84,167.10 565.94,167.20 566.05,168.01 566.16,168.85 566.26,168.85 566.37,167.21 566.48,165.68 566.59,164.69 566.69,160.43 566.80,154.78 566.91,140.20 567.01,126.66 567.12,122.26 567.23,119.05 567.34,118.20 567.44,117.06 567.55,116.57 567.66,115.19 567.76,116.45 567.87,116.63 567.98,118.07 568.09,119.13 568.19,121.91 568.30,124.72 568.41,126.15 568.51,141.54 568.62,156.11 568.73,158.95 568.84,161.52 568.94,165.50 569.05,166.20 569.16,168.26 569.26,168.72 569.37,168.85 569.48,168.85 569.59,166.73 569.69,165.44 569.80,164.02 569.91,160.46 570.01,156.44 570.12,140.48 570.23,126.91 570.34,121.03 570.44,118.59 570.55,116.55 570.66,115.04 570.76,116.38 570.87,116.92 570.98,116.87 571.09,117.63 571.19,118.90 571.30,120.35 571.41,120.85 571.51,122.56 571.62,127.56 571.73,140.04 571.84,154.01 571.94,160.44 572.05,162.02 572.16,164.87 572.26,167.45 572.37,166.65 572.48,168.85 572.59,168.85 572.69,168.54 572.80,166.82 572.91,165.95 573.01,164.27 573.12,160.77 573.23,156.70 573.34,139.99 573.44,125.43 573.55,122.92 573.66,120.49 573.76,118.03 573.87,116.64 573.98,114.81 574.09,114.81 574.19,115.21 574.30,117.98 574.41,117.06 574.51,118.63 574.62,120.61 574.73,122.26 574.84,128.61 574.94,142.14 575.05,154.42 575.16,158.15 575.26,161.81 575.37,165.13 575.48,166.22 575.59,167.18 575.69,168.85 575.80,168.85 575.91,168.85 576.01,168.85 576.12,166.44 576.23,164.85 576.34,161.32 576.44,156.75 576.55,140.75 576.66,127.99 576.76,121.63 576.87,120.08 576.98,118.60 577.09,115.14 577.19,116.47 577.30,114.81 577.41,115.13 577.51,115.78 577.62,118.76 577.73,119.31 577.84,122.05 577.94,122.41 578.05,126.55 578.16,140.88 578.26,155.21 578.37,159.72 578.48,161.43 578.59,164.66 578.69,166.12 578.80,168.79 578.91,168.85 579.01,168.85 579.12,168.35 579.23,167.87 579.34,167.32 579.44,163.02 579.55,161.25 579.66,156.04 579.76,142.11 579.87,127.31 579.98,121.31 580.09,119.72 580.19,118.26 580.30,116.28 580.41,116.21 580.51,114.81 580.62,117.10 580.73,115.54 580.84,118.97 580.94,118.14 581.05,120.56 581.16,124.29 581.26,127.51 581.37,141.77 581.48,155.72 581.59,160.08 581.69,162.63 581.80,163.32 581.91,165.15 582.01,166.74 582.12,168.85 582.23,168.85 582.34,167.87 582.44,168.85 582.55,165.80 582.66,164.53 582.76,159.38 582.87,157.08 582.98,140.41 583.09,127.13 583.19,123.14 583.30,120.59 583.41,116.52 583.51,116.19 583.62,116.56 583.73,115.88 583.84,115.01 583.94,117.53 584.05,117.63 584.16,120.12 584.26,121.83 584.37,122.82 584.48,126.89 584.59,142.00 584.69,156.18 584.80,160.38 584.91,161.99 585.01,164.62 585.12,167.05 585.23,168.62 585.34,168.47 585.44,168.60 585.55,168.10 585.66,167.80 585.76,167.17 585.87,165.12 585.98,160.03 586.09,156.05 586.19,140.63 586.30,127.88 586.41,121.38 586.51,119.72 586.62,116.49 586.73,115.30 586.84,115.76 586.94,116.98 587.05,115.02 587.16,116.86 587.26,116.84 587.37,119.79 587.48,121.82 587.59,122.66 587.69,127.79 587.80,142.09 587.91,155.42 588.01,159.05 588.12,163.57 588.23,164.55 588.34,166.60 588.44,167.81 588.55,168.85 588.66,168.58 588.76,168.08 588.87,167.06 588.98,166.86 589.09,163.43 589.19,160.94 589.30,155.16 589.41,142.36 589.51,125.74 589.62,121.01 589.73,119.30 589.84,117.35 589.94,116.18 590.05,115.64 590.16,116.97 590.26,114.87 590.37,117.52 590.48,118.64 590.59,120.22 590.69,121.65 590.80,122.70 590.91,128.68 591.01,142.27 591.12,154.56 591.23,160.10 591.34,163.54 591.44,164.35 591.55,166.25 591.66,167.79 591.76,168.24 591.87,168.85 591.98,167.94 592.09,167.44 592.19,167.58 592.30,164.97 592.41,160.65 592.51,155.81 592.62,141.79 592.73,127.70 592.84,122.44 592.94,120.24 593.05,117.15 593.16,115.31 593.26,116.66 593.37,115.52 593.48,115.44 593.59,117.67 593.69,116.96 593.80,118.03 593.91,121.29 594.01,123.74 594.12,126.56 594.23,141.14 594.34,155.36 594.44,158.14 594.55,161.55 594.66,165.03 594.76,167.13 594.87,168.28 594.98,168.85 595.09,167.88 595.19,168.11 595.30,166.93 595.41,165.57 595.51,163.08 595.62,161.80 595.73,155.77 595.84,140.01 595.94,125.58 596.05,122.85 596.16,119.49 596.26,117.04 596.37,116.61 596.48,115.66 596.58,116.84 596.69,116.26 596.80,116.78 596.91,119.07 597.01,120.12 597.12,119.77 597.23,122.81 597.33,126.30 597.44,140.86 597.55,154.27 597.66,158.29 597.76,161.27 597.87,165.82 597.98,166.08 598.08,168.47 598.19,168.30 598.30,168.85 598.41,168.80 598.51,166.90 598.62,166.08 598.73,164.64 598.83,160.58 598.94,155.99 599.05,140.03 599.16,127.27 599.26,122.70 599.37,118.90 599.48,118.38 599.58,116.01 599.69,114.81 599.80,115.68 599.91,116.69 600.01,116.88 600.12,117.73 600.23,120.10 600.33,121.98 600.44,124.50 600.55,127.99 600.66,141.46 600.76,155.64 600.87,159.97 600.98,163.35 601.08,164.48 601.19,165.57 601.30,167.57 601.41,168.59 601.51,168.75 601.62,168.85 601.73,167.46 601.83,166.50 601.94,163.86 602.05,160.34 602.16,155.90 602.26,141.71 602.37,127.39 602.48,122.92 602.58,119.25 602.69,117.69 602.80,116.03 602.91,117.01 603.01,116.10 603.12,115.14 603.23,117.48 603.33,117.67 603.44,119.20 603.55,121.56 603.66,122.26 603.76,127.98 603.87,140.50 603.98,155.98 604.08,160.43 604.19,161.31 604.30,164.76 604.41,167.60 604.51,168.15 604.62,168.85 604.73,168.53 604.83,168.85 604.94,168.73 605.05,165.19 605.16,163.36 605.26,161.54 605.37,156.24 605.48,141.60 605.58,126.26 605.69,121.89 605.80,118.37 605.91,116.55 606.01,116.21 606.12,115.11 606.23,115.08 606.33,115.41 606.44,116.86 606.55,117.07 606.66,118.63 606.76,119.91 606.87,124.51 606.98,126.48 607.08,142.51 607.19,154.39 607.30,159.07 607.41,162.28 607.51,163.40 607.62,166.27 607.73,168.07 607.83,168.03 607.94,168.17 608.05,168.63 608.16,168.33 608.26,166.52 608.37,164.10 608.48,160.05 608.58,156.36 608.69,141.50 608.80,126.57 608.91,122.50 609.01,119.75 609.12,116.64 609.23,115.34 609.33,115.74 609.44,115.86 609.55,116.91 609.66,117.31 609.76,118.74 609.87,118.98 609.98,120.78 610.08,124.61 610.19,126.35 610.30,141.67 610.41,154.18 610.51,158.41 610.62,161.08 610.73,165.38 610.83,166.65 610.94,166.78 611.05,168.85 611.16,168.85 611.26,168.74 611.37,168.02 611.48,165.29 611.58,163.27 611.69,160.53 611.80,154.51 611.91,141.17 612.01,126.67 612.12,121.71 612.23,119.58 612.33,117.76 612.44,116.01 612.55,116.13 612.66,114.81 612.76,115.63 612.87,116.73 612.98,118.86 613.08,119.50 613.19,121.26 613.30,123.37 613.41,127.25 613.51,140.22 613.62,153.87 613.73,159.33 613.83,162.43 613.94,164.28 614.05,165.16 614.16,168.26 614.26,168.69 614.37,168.32 614.48,168.85 614.58,168.49 614.69,165.14 614.80,163.13 614.91,160.60 615.01,156.83 615.12,140.18 615.23,126.22 615.33,121.36 615.44,118.00 615.55,116.37 615.66,116.46 615.76,116.64 615.87,116.26 615.98,116.06 616.08,116.78 616.19,118.63 616.30,120.01 616.41,120.66 616.51,123.26 616.62,127.83 616.73,139.92 616.83,154.73 616.94,160.49 617.05,162.51 617.16,163.85 617.26,166.96 617.37,167.35 617.48,168.85 617.58,168.85 617.69,168.02 617.80,167.79 617.91,165.95 618.01,164.78 618.12,160.64 618.23,155.67 618.33,141.82 618.44,126.33 618.55,122.11 618.66,117.99 618.76,117.19 618.87,116.49 618.98,116.73 619.08,116.61 619.19,115.41 619.30,117.82 619.41,118.86 619.51,120.04 619.62,120.94 619.73,122.69 619.83,127.15 619.94,140.41 620.05,156.23 620.16,160.57 620.26,161.57 620.37,165.07 620.48,165.89 620.58,168.24 620.69,168.85 620.80,168.85 620.91,168.85 621.01,166.96 621.12,166.18 621.23,164.38 621.33,160.77 621.44,156.11 621.55,142.38 621.66,125.69 621.76,121.98 621.87,118.08 621.98,117.55 622.08,115.94 622.19,116.39 622.30,116.91 622.41,114.96 622.51,115.87 622.62,118.30 622.73,118.13 622.83,120.17 622.94,124.05 623.05,127.18 623.16,140.01 623.26,155.09 623.37,158.12 623.48,162.95 623.58,164.89 623.69,165.88 623.80,168.58 623.91,168.85 624.01,168.16 624.12,168.85 624.23,167.25 624.33,167.07 624.44,164.84 624.55,161.00 624.66,156.63 624.76,139.98 624.87,127.26 624.98,122.03 625.08,120.29 625.19,117.30 625.30,116.56 625.41,115.99 625.51,116.85 625.62,117.07 625.73,115.94 625.83,118.20 625.94,119.84 626.05,121.80 626.16,124.10 626.26,128.13 626.37,142.43 626.48,154.65 626.58,159.71 626.69,163.18 626.80,164.07 626.91,167.52 627.01,168.46 627.12,167.89 627.23,168.85 627.33,168.85 627.44,167.13 627.55,165.60 627.66,164.88 627.76,161.02 627.87,155.23 627.98,141.53 628.08,125.52 628.19,122.96 628.30,118.11 628.41,117.37 628.51,116.97 628.62,115.86 628.73,116.68 628.83,115.55 628.94,117.42 629.05,116.77 629.16,118.95 629.26,121.34 629.37,124.20 629.48,127.16 629.58,141.96 629.69,154.11 629.80,160.28 629.91,162.24 630.01,164.49 630.12,167.05 630.23,167.14 630.33,168.85 630.44,168.73 630.55,168.73 630.66,168.51 630.76,166.68 630.87,165.07 630.98,161.48 631.08,154.90 631.19,141.68 631.30,126.29 631.41,123.22 631.51,119.12 631.62,117.75 631.73,116.26 631.83,116.27 631.94,116.85 632.05,116.58 632.16,117.51 632.26,118.79 632.37,118.61 632.48,121.57 632.58,123.78 632.69,126.38 632.80,140.49 632.91,154.08 633.01,158.35 633.12,163.24 633.23,165.19 633.33,167.68 633.44,167.38 633.55,168.34 633.66,168.85 633.76,168.85 633.87,167.60 633.98,165.87 634.08,164.64 634.19,159.73 634.30,156.20 634.40,140.87 634.51,127.55 634.62,123.20 634.73,118.21 634.83,116.78 634.94,115.70 635.05,116.94 635.15,116.92 635.26,116.97 635.37,117.59 635.48,118.33 635.58,119.49 635.69,122.20 635.80,124.03 635.90,127.08 636.01,142.05 636.12,154.19 636.23,159.11 636.33,161.71 636.44,165.25 636.55,166.62 636.65,167.37 636.76,168.85 636.87,168.85 636.98,168.04 637.08,167.29 637.19,166.95 637.30,165.18 637.40,159.71 637.51,155.53 637.62,142.40 637.73,127.38 637.83,123.21 637.94,118.52 638.05,118.15 638.15,115.17 638.26,115.09 638.37,116.80 638.48,115.58 638.58,117.07 638.69,117.17 638.80,118.32 638.90,121.57 639.01,124.60 639.12,126.28 639.23,141.41 639.33,153.96 639.44,158.80 639.55,161.65 639.65,163.74 639.76,166.12 639.87,167.98 639.98,168.85 640.08,168.62 640.19,168.85 640.30,167.98 640.40,165.27 640.51,164.96 640.62,159.95 640.73,157.01 640.83,140.68 640.94,125.92 641.05,122.82 641.15,119.16 641.26,116.16 641.37,115.90 641.48,115.62 641.58,116.37 641.69,117.24 641.80,117.17 641.90,118.04 642.01,119.96 642.12,121.49 642.23,124.48 642.33,126.91 642.44,140.77 642.55,155.77 642.65,159.97 642.76,162.24 642.87,164.75 642.98,165.31 643.08,168.24 643.19,168.85 643.30,168.14 643.40,168.85 643.51,167.85 643.62,166.83 643.73,163.16 643.83,160.51 643.94,155.13 644.05,142.08 644.15,126.28 644.26,121.94 644.37,119.39 644.48,116.69 644.58,115.39 644.69,116.75 644.80,116.26 644.90,116.45 645.01,117.56 645.12,118.96 645.23,119.75 645.33,121.79 645.44,123.00 645.55,127.58 645.65,142.22 645.76,155.54 645.87,159.38 645.98,162.63 646.08,165.47 646.19,167.57 646.30,168.85 646.40,167.48 646.51,168.49 646.62,168.85 646.73,167.44 646.83,165.14 646.94,163.82 647.05,161.66 647.15,155.84 647.26,141.38 647.37,127.53 647.48,122.08 647.58,120.57 647.69,116.29 647.80,115.88 647.90,115.40 648.01,114.81 648.12,115.69 648.23,117.45 648.33,118.48 648.44,120.12 648.55,122.23 648.65,122.81 648.76,126.56 648.87,141.74 648.98,155.90 649.08,158.94 649.19,161.37 649.30,163.49 649.40,167.32 649.51,167.11 649.62,167.90 649.73,168.51 649.83,168.85 649.94,168.84 650.05,165.54 650.15,164.46 650.26,160.98 650.37,155.68 650.48,141.55 650.58,125.85 650.69,122.88 650.80,120.49 650.90,117.21 651.01,115.92 651.12,114.90 651.23,115.18 651.33,115.03 651.44,115.63 651.55,117.83 651.65,119.18 651.76,121.89 651.87,124.06 651.98,127.23 652.08,142.31 652.19,154.59 652.30,160.18 652.40,162.42 652.51,163.38 652.62,167.53 652.73,168.85 652.83,168.85 652.94,168.85 653.05,168.33 653.15,168.85 653.26,165.50 653.37,163.06 653.48,159.88 653.58,156.01 653.69,141.78 653.80,126.29 653.90,122.16 654.01,119.49 654.12,117.81 654.23,116.42 654.33,115.30 654.44,114.86 654.55,115.03 654.65,117.67 654.76,118.35 654.87,119.32 654.98,120.83 655.08,123.93 655.19,128.24 655.30,142.30 655.40,155.54 655.51,159.40 655.62,161.04 655.73,163.54 655.83,165.50 655.94,166.61 656.05,167.56 656.15,168.83 656.26,168.10 656.37,168.85 656.48,165.93 656.58,163.70 656.69,161.17 656.80,155.63 656.90,140.03 657.01,126.77 657.12,121.81 657.23,119.81 657.33,117.80 657.44,115.25 657.55,116.97 657.65,116.53 657.76,115.62 657.87,116.93 657.98,118.90 658.08,118.76 658.19,121.33 658.30,123.32 658.40,127.66 658.51,141.13 658.62,154.91 658.73,159.57 658.83,163.28 658.94,165.44 659.05,165.43 659.15,167.73 659.26,168.85 659.37,168.20 659.48,168.85 659.58,168.85 659.69,166.31 659.80,164.64 659.90,160.66 660.01,155.67 660.12,141.93 660.23,126.52 660.33,123.21 660.44,119.25 660.55,117.16 660.65,117.35 660.76,115.98 660.87,116.83 660.98,116.25 661.08,115.85 661.19,117.68 661.30,118.62 661.40,120.33 661.51,124.54 661.62,126.16 661.73,140.63 661.83,156.12 661.94,158.43 662.05,162.56 662.15,165.47 662.26,165.25 662.37,167.69 662.48,168.05 662.58,168.85 662.69,168.19 662.80,168.85 662.90,167.08 663.01,164.32 663.12,161.90 663.23,155.57 663.33,141.96 663.44,127.24 663.55,121.65 663.65,119.48 663.76,116.37 663.87,115.94 663.98,114.81 664.08,115.55 664.19,115.00 664.30,115.83 664.40,118.68 664.51,118.53 664.62,121.41 664.73,122.84 664.83,126.97 664.94,140.36 665.05,156.07 665.15,159.63 665.26,161.66 665.37,163.43 665.48,165.87 665.58,168.85 665.69,168.50 665.80,168.85 665.90,168.78 666.01,167.22 666.12,167.41 666.23,162.87 666.33,160.18 666.44,156.46 666.55,142.01 666.65,126.85 666.76,121.31 666.87,119.07 666.98,118.40 667.08,117.51 667.19,116.76 667.30,114.93 667.40,116.91 667.51,116.65 667.62,118.36 667.73,118.69 667.83,121.31 667.94,124.46 668.05,126.46 668.15,141.11 668.26,154.59 668.37,158.49 668.48,161.10 668.58,165.88 668.69,166.87 668.80,168.77 668.90,168.76 669.01,168.17 669.12,168.12 669.23,168.85 669.33,167.22 669.44,163.15 669.55,160.16 669.65,156.10 669.76,141.27 669.87,127.61 669.98,121.29 670.08,119.57 670.19,116.41 670.30,115.97 670.40,116.85 670.51,116.16 670.62,116.83 670.73,115.77 670.83,117.58 670.94,120.37 671.05,121.86 671.15,123.90 671.26,127.53 671.37,141.01 671.48,155.38 671.58,159.68 671.69,163.57 671.80,164.40 671.90,166.89 672.01,168.85 672.12,168.85 672.23,167.87 672.33,168.85 672.44,168.85 672.55,165.95 672.65,164.58 672.76,161.23 672.87,155.81 672.97,141.83 673.08,126.53 673.19,122.12 673.30,118.09 673.40,116.10 673.51,117.47 673.62,115.58 673.72,115.01 673.83,115.11 673.94,116.08 674.05,117.47 674.15,118.82 674.26,121.36 674.37,124.10 674.47,126.67 674.58,140.24 674.69,153.94 674.80,158.82 674.90,162.79 675.01,163.92 675.12,165.83 675.22,167.83 675.33,168.41 675.44,168.85 675.55,168.78 675.65,168.26 675.76,167.54 675.87,164.41 675.97,161.10 676.08,154.54 676.19,141.26 676.30,127.06 676.40,122.87 676.51,119.98 676.62,117.78 676.72,117.21 676.83,117.03 676.94,114.81 677.05,116.21 677.15,116.94 677.26,117.63 677.37,119.69 677.47,121.86 677.58,124.67 677.69,127.97 677.80,141.71 677.90,154.49 678.01,159.16 678.12,161.13 678.22,165.02 678.33,165.35 678.44,167.63 678.55,168.85 678.65,168.85 678.76,168.70 678.87,166.74 678.97,166.77 679.08,163.27 679.19,160.82 679.30,154.85 679.40,142.34 679.51,126.76 679.62,121.15 679.72,119.87 679.83,118.02 679.94,117.50 680.05,116.62 680.15,116.32 680.26,115.55 680.37,117.53 680.47,118.08 680.58,119.96 680.69,120.73 680.80,122.58 680.90,127.06 681.01,142.00 681.12,154.47 681.22,158.09 681.33,162.01 681.44,165.71 681.55,165.65 681.65,166.87 681.76,168.85 681.87,168.85 681.97,168.85 682.08,167.92 682.19,165.41 682.30,163.62 682.40,159.53 682.51,156.57 682.62,141.66 682.72,126.06 682.83,121.81 682.94,119.53 683.05,116.92 683.15,116.68 683.26,116.90 683.37,115.94 683.47,117.28 683.58,116.47 683.69,118.25 683.80,119.19 683.90,120.74 684.01,124.17 684.12,127.54 684.22,142.48 684.33,153.97 684.44,159.13 684.55,161.00 684.65,165.77 684.76,166.16 684.87,167.27 684.97,168.85 685.08,168.85 685.19,168.85 685.30,168.85 685.40,165.70 685.51,165.06 685.62,159.81 685.72,156.01 685.83,141.11 685.94,126.48 686.05,122.05 686.15,118.87 686.26,117.12 686.37,116.70 686.47,115.11 686.58,116.35 686.69,115.54 686.80,116.11 686.90,117.09 687.01,119.68 687.12,120.28 687.22,122.28 687.33,127.57 687.44,141.79 687.55,155.02 687.65,158.14 687.76,163.24 687.87,165.89 687.97,166.52 688.08,167.45 688.19,168.05 688.30,168.85 688.40,167.63 688.51,168.72 688.62,165.72 688.72,165.06 688.83,161.87 688.94,156.77 689.05,142.36 689.15,126.71 689.26,122.05 689.37,120.12 689.47,116.24 689.58,116.61 689.69,116.66 689.80,116.56 689.90,115.47 690.01,115.69 690.12,118.70 690.22,120.41 690.33,120.27 690.44,124.21 690.55,126.18 690.65,141.21 690.76,154.73 690.87,159.71 690.97,161.49 691.08,164.71 691.19,166.92 691.30,166.80 691.40,168.85 691.51,168.53 691.62,168.85 691.72,167.63 691.83,166.65 691.94,163.03 692.05,161.78 692.15,155.65 692.26,141.45 692.37,125.62 692.47,121.03 692.58,118.95 692.69,118.11 692.80,116.90 692.90,116.36 693.01,115.89 693.12,116.79 693.22,117.57 693.33,117.14 693.44,118.80 693.55,121.52 693.65,122.24 693.76,128.19 693.87,141.03 693.97,155.98 694.08,158.35 694.19,161.31 694.30,165.21 694.40,165.80 694.51,167.01 694.62,168.85 694.72,168.85 694.83,168.85 694.94,166.99 695.05,167.28 695.15,163.51 695.26,160.38 695.37,155.94 695.47,141.00 695.58,125.71 695.69,122.95 695.80,118.28 695.90,117.75 696.01,115.52 696.12,114.81 696.22,116.54 696.33,115.14 696.44,115.50 696.55,118.34 696.65,120.42 696.76,122.01 696.87,122.29 696.97,128.73 697.08,140.13 697.19,156.00 697.30,158.68 697.40,163.33 697.51,165.47 697.62,165.98 697.72,168.85 697.83,168.85 697.94,168.05 698.05,168.34 698.15,167.01 698.26,165.14 698.37,165.21 698.47,161.33 698.58,155.05 698.69,140.72 698.80,127.92 698.90,122.18 699.01,119.99 699.12,117.57 699.22,117.29 699.33,116.99 699.44,114.81 699.55,116.57 699.65,115.81 699.76,118.81 699.87,119.21 699.97,121.95 700.08,123.72 700.19,128.29 700.30,140.73 700.40,156.00 700.51,158.67 700.62,162.27 700.72,165.62 700.83,166.84 700.94,167.86 701.05,167.67 701.15,168.85 701.26,168.85 701.37,166.79 701.47,165.39 701.58,163.38 701.69,161.23 701.80,156.66 701.90,141.83 702.01,127.84 702.12,123.39 702.22,119.26 702.33,117.63 702.44,116.11 702.55,116.10 702.65,116.99 702.76,115.60 702.87,116.40 702.97,117.70 703.08,119.05 703.19,120.50 703.30,122.27 703.40,126.47 703.51,140.64 703.62,155.35 703.72,159.77 703.83,162.49 703.94,163.37 704.05,166.75 704.15,168.15 704.26,168.85 704.37,168.85 704.47,167.61 704.58,168.85 704.69,166.11 704.80,162.87 704.90,161.28 705.01,155.52 705.12,141.53 705.22,127.39 705.33,122.98 705.44,120.29 705.55,116.49 705.65,115.51 705.76,114.81 705.87,116.89 705.97,115.58 706.08,117.25 706.19,117.43 706.30,119.05 706.40,121.48 706.51,122.30 706.62,128.75 706.72,140.57 706.83,154.16 706.94,159.27 707.05,162.03 707.15,163.31 707.26,167.15 707.37,167.51 707.47,168.13 707.58,168.85 707.69,168.36 707.80,168.29 707.90,166.33 708.01,163.69 708.12,160.17 708.22,156.28 708.33,140.87 708.44,126.60 708.55,122.92 708.65,118.99 708.76,118.00 708.87,115.19 708.97,115.81 709.08,115.13 709.19,116.03 709.30,116.86 709.40,118.54 709.51,120.11 709.62,119.88 709.72,123.46 709.83,127.38 709.94,141.14 710.05,154.26 710.15,159.98 710.26,163.13 710.37,163.76 710.47,166.56 710.58,167.49 710.69,167.91 710.80,168.11 710.90,167.95 711.01,168.85 711.12,166.70 711.22,163.12 711.33,159.80 711.44,156.80 711.54,142.12 711.65,127.36 711.76,123.23 711.87,119.66 711.97,116.59 712.08,116.20 712.19,115.86 712.29,116.79 712.40,116.36 712.51,115.50 712.62,117.30 712.72,119.31 712.83,121.05 712.94,122.75 713.04,126.77 713.15,142.13 713.26,154.61 713.37,159.65 713.47,162.22 713.58,165.29 713.69,166.79 713.79,168.27 713.90,168.85 714.01,168.85 714.12,168.85 714.22,167.83 714.33,167.55 714.44,164.83 714.54,160.06 714.65,156.40 714.76,141.67 714.87,127.39 714.97,121.32 715.08,120.35 715.19,117.03 715.29,115.32 715.40,116.52 715.51,115.92 715.62,115.32 715.72,116.49 715.83,118.15 715.94,120.37 716.04,121.15 716.15,123.88 716.26,126.89 716.37,141.75 716.47,155.32 716.58,158.91 716.69,161.46 716.79,164.99 716.90,166.75 717.01,167.65 717.12,167.66 717.22,168.85 717.33,167.68 717.44,167.46 717.54,166.73 717.65,163.55 717.76,161.08 717.87,156.94 717.97,140.54 718.08,127.03 718.19,122.13 718.29,119.30 718.40,116.34 718.51,115.58 718.62,116.98 718.72,115.47 718.83,116.19 718.94,116.89 719.04,116.93 719.15,119.40 719.26,121.07 719.37,122.51 719.47,127.60 719.58,141.23 719.69,155.05 719.79,158.45 719.90,161.83 720.01,163.98 720.12,166.71 720.22,168.85 720.33,168.30 720.44,168.85 720.54,168.21 720.65,167.31 720.76,167.39 720.87,164.72 720.97,161.74 721.08,154.98 721.19,142.25 721.29,127.79 721.40,121.53 721.51,119.12 721.62,118.55 721.72,115.78 721.83,115.19 721.94,115.76 722.04,117.25 722.15,116.30 722.26,118.03 722.37,118.96 722.47,119.69 722.58,122.70 722.69,126.47 722.79,142.14 722.90,155.52 723.01,159.25 723.12,163.57 723.22,163.33 723.33,167.04 723.44,168.47 723.54,168.85 723.65,168.85 723.76,167.97 723.87,167.87 723.97,166.37 724.08,164.20 724.19,161.81 724.29,156.33 724.40,140.25 724.51,125.93 724.62,121.26 724.72,119.92 724.83,118.17 724.94,117.43 725.04,115.64 725.15,116.04 725.26,116.18 725.37,116.82 725.47,117.59 725.58,119.53 725.69,120.21 725.79,124.32 725.90,126.35 726.01,141.06 726.12,156.26 726.22,159.78 726.33,162.19 726.44,164.84 726.54,166.28 726.65,168.31 726.76,168.85 726.87,168.37 726.97,168.85 727.08,167.46 727.19,165.60 727.29,163.75 727.40,160.75 727.51,154.68 727.62,141.36 727.72,125.73 727.83,123.35 727.94,119.46 728.04,117.02 728.15,117.44 728.26,114.81 728.37,116.83 728.47,115.84 728.58,117.63 728.69,116.71 728.79,119.02 728.90,120.21 729.01,123.54 729.12,126.99 729.22,140.75 729.33,155.62 729.44,160.05 729.54,161.39 729.65,165.53 729.76,165.36 729.87,168.62 729.97,168.85 730.08,168.85 730.19,168.17 730.29,166.83 730.40,166.62 730.51,163.57 730.62,161.27 730.72,154.75 730.83,140.73 730.94,127.62 731.04,123.35 731.15,118.77 731.26,118.59 731.37,115.38 731.47,116.28 731.58,116.41 731.69,115.87 731.79,117.27 731.90,117.66 732.01,120.08 732.12,119.92 732.22,123.99 732.33,126.55 732.44,142.12 732.54,154.30 732.65,158.04 732.76,162.56 732.87,165.83 732.97,166.77 733.08,167.48 733.19,168.85 733.29,168.85 733.40,168.85 733.51,168.10 733.62,165.80 733.72,164.17 733.83,160.17 733.94,156.82 734.04,140.35 734.15,127.70 734.26,121.09 734.37,117.99 734.47,116.24 734.58,116.19 734.69,116.29 734.79,116.11 734.90,115.43 735.01,116.80 735.12,116.69 735.22,120.24 735.33,121.04 735.44,122.58 735.54,127.19 735.65,141.10 735.76,156.16 735.87,160.24 735.97,162.87 736.08,163.58 736.19,165.55 736.29,168.57 736.40,167.66 736.51,168.85 736.62,168.65 736.72,166.79 736.83,166.80 736.94,162.82 737.04,160.22 737.15,156.99 737.26,141.65 737.37,126.85 737.47,122.86 737.58,118.65 737.69,118.23 737.79,115.50 737.90,116.27 738.01,116.84 738.12,115.93 738.22,117.85 738.33,117.68 738.44,118.42 738.54,120.75 738.65,123.63 738.76,128.67 738.87,141.18 738.97,156.14 739.08,158.91 739.19,163.24 739.29,164.40 739.40,166.84 739.51,168.18 739.62,168.34 739.72,168.85 739.83,168.85 739.94,166.86 740.04,166.83 740.15,163.09 740.26,159.66 740.37,155.87 740.47,142.13 740.58,127.78 740.69,121.20 740.79,120.29 740.90,117.40 741.01,116.16 741.12,116.74 741.22,115.80 741.33,116.97 741.44,116.70 741.54,117.80 741.65,119.52 741.76,121.79 741.87,123.78 741.97,128.22 742.08,142.19 742.19,155.76 742.29,158.33 742.40,162.27 742.51,163.58 742.62,167.72 742.72,166.69 742.83,168.80 742.94,168.38 743.04,168.73 743.15,167.52 743.26,167.10 743.37,163.33 743.47,161.54 743.58,156.43 743.69,142.44 743.79,126.99 743.90,122.15 744.01,119.83 744.12,116.37 744.22,117.34 744.33,115.53 744.44,116.41 744.54,115.84 744.65,116.05 744.76,117.26 744.87,120.32 744.97,121.66 745.08,123.27 745.19,126.18 745.29,142.41 745.40,154.77 745.51,158.80 745.62,161.45 745.72,165.02 745.83,165.64 745.94,167.95 746.04,167.67 746.15,168.85 746.26,167.76 746.37,168.24 746.47,166.64 746.58,165.06 746.69,161.30 746.79,155.20 746.90,140.74 747.01,127.63 747.12,122.60 747.22,120.23 747.33,118.18 747.44,116.99 747.54,116.18 747.65,114.81 747.76,114.81 747.87,116.03 747.97,117.87 748.08,119.18 748.19,120.27 748.29,122.46 748.40,126.79 748.51,140.85 748.62,155.87 748.72,158.97 748.83,161.37 748.94,163.86 749.04,167.52 749.15,167.28 749.26,168.85 749.37,168.85 749.47,167.69 749.58,167.56 749.69,165.75 749.79,164.94 749.90,159.78 750.01,154.67 750.11,140.15 750.22,126.07 750.33,121.33 750.44,118.50 750.54,117.15 750.65,116.43 750.76,114.89 750.86,114.97 750.97,115.12 751.08,117.32 751.19,116.61 751.29,119.09 751.40,119.83 751.51,124.54 751.61,126.22 751.72,140.46 751.83,155.73 751.94,158.41 752.04,162.98 752.15,165.40 752.26,166.56 752.36,168.54 752.47,168.79 752.58,168.08 752.69,168.43 752.79,167.46 752.90,166.68 753.01,163.24 753.11,159.87 753.22,155.34 753.33,140.06 753.44,125.86 753.54,122.44 753.65,120.37 753.76,116.99 753.86,115.38 753.97,116.16 754.08,115.47 754.19,115.21 754.29,116.03 754.40,119.11 754.51,119.20 754.61,122.26 754.72,124.55 754.83,126.63 754.94,141.42 755.04,154.81 755.15,159.41 755.26,162.71 755.36,165.35 755.47,166.84 755.58,166.95 755.69,168.46 755.79,168.85 755.90,168.85 756.01,168.61 756.11,165.87 756.22,164.14 756.33,160.21 756.44,155.01 756.54,142.20 756.65,126.24 756.76,123.39 756.86,118.44 756.97,118.21 757.08,116.85 757.19,114.81 757.29,116.07 757.40,116.81 757.51,115.78 757.61,117.53 757.72,118.15 757.83,121.27 757.94,123.53 758.04,126.25 758.15,141.19 758.26,153.81 758.36,160.11 758.47,161.41 758.58,165.49 758.69,166.38 758.79,168.85 758.90,168.85 759.01,167.98 759.11,168.85 759.22,167.20 759.33,167.05 759.44,164.37 759.54,161.68 759.65,155.68 759.76,140.26 759.86,126.68 759.97,122.52 760.08,118.17 760.19,116.36 760.29,115.82 760.40,116.85 760.51,115.39 760.61,116.23 760.72,115.60 760.83,118.18 760.94,118.75 761.04,120.65 761.15,123.86 761.26,127.39 761.36,140.75 761.47,154.02 761.58,159.30 761.69,162.63 761.79,163.36 761.90,167.61 762.01,166.98 762.11,168.29 762.22,168.85 762.33,168.85 762.44,167.36 762.54,165.37 762.65,163.39 762.76,159.98 762.86,157.03 762.97,141.67 763.08,127.66 763.19,121.01 763.29,118.26 763.40,118.32 763.51,116.03 763.61,115.54 763.72,116.90 763.83,116.37 763.94,116.15 764.04,117.44 764.15,119.75 764.26,120.31 764.36,124.08 764.47,127.33 764.58,141.42 764.69,153.83 764.79,158.91 764.90,161.48 765.01,164.14 765.11,166.77 765.22,166.64 765.33,168.22 765.44,168.64 765.54,168.85 765.65,168.85 765.76,166.20 765.86,163.13 765.97,159.87 766.08,156.21 766.19,142.15 766.29,126.67 766.40,121.21 766.51,120.17 766.61,116.76 766.72,117.12 766.83,116.23 766.94,116.88 767.04,116.62 767.15,117.10 767.26,116.59 767.36,117.97 767.47,121.81 767.58,124.03 767.69,126.29 767.79,142.00 767.90,155.55 768.01,159.46 768.11,163.30 768.22,165.23 768.33,166.73 768.44,168.15 768.54,167.56 768.65,168.85 768.76,168.85 768.86,166.94 768.97,166.52 769.08,163.10 769.19,160.28 769.29,155.09 769.40,141.70" fill="none" stroke="#aef6f6" stroke-width="2.0" stroke-linejoin="round"/>
<rect x="385.46" y="118.0" width="0.7" height="41.1" fill="#063a3a" fill-opacity="0.26"/>
<rect x="383.92" y="122.0" width="0.5" height="33.1" fill="#0a3030" fill-opacity="0.17"/>
<rect x="388.68" y="117.8" width="0.7" height="44.0" fill="#063a3a" fill-opacity="0.51"/>
<rect x="387.14" y="121.8" width="0.5" height="36.0" fill="#0a3030" fill-opacity="0.18"/>
<rect x="391.90" y="117.0" width="0.7" height="46.3" fill="#063a3a" fill-opacity="0.50"/>
<rect x="390.36" y="121.0" width="0.5" height="38.3" fill="#0a3030" fill-opacity="0.14"/>
<rect x="395.12" y="116.8" width="0.7" height="43.8" fill="#063a3a" fill-opacity="0.34"/>
<rect x="393.58" y="120.8" width="0.5" height="35.8" fill="#0a3030" fill-opacity="0.08"/>
<rect x="398.35" y="118.0" width="0.7" height="37.0" fill="#063a3a" fill-opacity="0.43"/>
<rect x="396.80" y="122.0" width="0.5" height="29.0" fill="#0a3030" fill-opacity="0.03"/>
<rect x="401.57" y="117.5" width="0.7" height="40.4" fill="#063a3a" fill-opacity="0.71"/>
<rect x="400.02" y="121.5" width="0.5" height="32.4" fill="#0a3030" fill-opacity="0.08"/>
<rect x="404.79" y="116.8" width="0.7" height="40.2" fill="#063a3a" fill-opacity="0.63"/>
<rect x="403.24" y="120.8" width="0.5" height="32.2" fill="#0a3030" fill-opacity="0.11"/>
<rect x="408.01" y="117.5" width="0.7" height="44.3" fill="#063a3a" fill-opacity="0.20"/>
<rect x="406.46" y="121.5" width="0.5" height="36.3" fill="#0a3030" fill-opacity="0.12"/>
<rect x="411.23" y="117.1" width="0.7" height="45.1" fill="#063a3a" fill-opacity="0.50"/>
<rect x="409.68" y="121.1" width="0.5" height="37.1" fill="#0a3030" fill-opacity="0.10"/>
<rect x="414.45" y="116.9" width="0.7" height="43.9" fill="#063a3a" fill-opacity="0.46"/>
<rect x="412.90" y="120.9" width="0.5" height="35.9" fill="#0a3030" fill-opacity="0.06"/>
<rect x="417.67" y="117.7" width="0.7" height="43.5" fill="#063a3a" fill-opacity="0.46"/>
<rect x="416.12" y="121.7" width="0.5" height="35.5" fill="#0a3030" fill-opacity="0.03"/>
<rect x="420.89" y="117.1" width="0.7" height="46.5" fill="#063a3a" fill-opacity="0.30"/>
<rect x="419.35" y="121.1" width="0.5" height="38.5" fill="#0a3030" fill-opacity="0.02"/>
<rect x="424.11" y="117.0" width="0.7" height="41.4" fill="#063a3a" fill-opacity="0.32"/>
<rect x="422.57" y="121.0" width="0.5" height="33.4" fill="#0a3030" fill-opacity="0.02"/>
<rect x="427.33" y="117.0" width="0.7" height="39.4" fill="#063a3a" fill-opacity="0.33"/>
<rect x="425.79" y="121.0" width="0.5" height="31.4" fill="#0a3030" fill-opacity="0.04"/>
<rect x="430.55" y="117.4" width="0.7" height="42.1" fill="#063a3a" fill-opacity="0.36"/>
<rect x="429.01" y="121.4" width="0.5" height="34.1" fill="#0a3030" fill-opacity="0.06"/>
<rect x="433.77" y="118.4" width="0.7" height="37.5" fill="#063a3a" fill-opacity="0.32"/>
<rect x="432.23" y="122.4" width="0.5" height="29.5" fill="#0a3030" fill-opacity="0.07"/>
<rect x="437.00" y="116.3" width="0.7" height="42.3" fill="#063a3a" fill-opacity="0.46"/>
<rect x="435.45" y="120.3" width="0.5" height="34.3" fill="#0a3030" fill-opacity="0.06"/>
<rect x="440.22" y="118.2" width="0.7" height="42.7" fill="#063a3a" fill-opacity="0.55"/>
<rect x="438.67" y="122.2" width="0.5" height="34.7" fill="#0a3030" fill-opacity="0.03"/>
<rect x="443.44" y="117.1" width="0.7" height="42.9" fill="#063a3a" fill-opacity="0.39"/>
<rect x="441.89" y="121.1" width="0.5" height="34.9" fill="#0a3030" fill-opacity="0.06"/>
<rect x="446.66" y="118.2" width="0.7" height="43.9" fill="#063a3a" fill-opacity="0.39"/>
<rect x="445.11" y="122.2" width="0.5" height="35.9" fill="#0a3030" fill-opacity="0.11"/>
<rect x="449.88" y="116.5" width="0.7" height="44.5" fill="#063a3a" fill-opacity="0.70"/>
<rect x="448.33" y="120.5" width="0.5" height="36.5" fill="#0a3030" fill-opacity="0.15"/>
<rect x="453.10" y="117.4" width="0.7" height="45.8" fill="#063a3a" fill-opacity="0.63"/>
<rect x="451.55" y="121.4" width="0.5" height="37.8" fill="#0a3030" fill-opacity="0.16"/>
<rect x="456.32" y="118.0" width="0.7" height="44.4" fill="#063a3a" fill-opacity="0.38"/>
<rect x="454.77" y="122.0" width="0.5" height="36.4" fill="#0a3030" fill-opacity="0.14"/>
<rect x="459.54" y="118.3" width="0.7" height="37.6" fill="#063a3a" fill-opacity="0.47"/>
<rect x="458.00" y="122.3" width="0.5" height="29.6" fill="#0a3030" fill-opacity="0.09"/>
<rect x="462.76" y="117.9" width="0.7" height="42.6" fill="#063a3a" fill-opacity="0.56"/>
<rect x="461.22" y="121.9" width="0.5" height="34.6" fill="#0a3030" fill-opacity="0.02"/>
<rect x="465.98" y="116.3" width="0.7" height="44.1" fill="#063a3a" fill-opacity="0.36"/>
<rect x="464.44" y="120.3" width="0.5" height="36.1" fill="#0a3030" fill-opacity="0.09"/>
<rect x="469.20" y="116.8" width="0.7" height="39.8" fill="#063a3a" fill-opacity="0.29"/>
<rect x="467.66" y="120.8" width="0.5" height="31.8" fill="#0a3030" fill-opacity="0.15"/>
<rect x="472.42" y="116.3" width="0.7" height="44.7" fill="#063a3a" fill-opacity="0.23"/>
<rect x="470.88" y="120.3" width="0.5" height="36.7" fill="#0a3030" fill-opacity="0.17"/>
<rect x="475.65" y="118.1" width="0.7" height="39.9" fill="#063a3a" fill-opacity="0.36"/>
<rect x="474.10" y="122.1" width="0.5" height="31.9" fill="#0a3030" fill-opacity="0.15"/>
<rect x="478.87" y="116.3" width="0.7" height="46.3" fill="#063a3a" fill-opacity="0.35"/>
<rect x="477.32" y="120.3" width="0.5" height="38.3" fill="#0a3030" fill-opacity="0.11"/>
<rect x="482.09" y="116.1" width="0.7" height="44.5" fill="#063a3a" fill-opacity="0.25"/>
<rect x="480.54" y="120.1" width="0.5" height="36.5" fill="#0a3030" fill-opacity="0.06"/>
<rect x="485.31" y="116.8" width="0.7" height="38.4" fill="#063a3a" fill-opacity="0.42"/>
<rect x="483.76" y="120.8" width="0.5" height="30.4" fill="#0a3030" fill-opacity="0.04"/>
<rect x="488.53" y="117.5" width="0.7" height="44.8" fill="#063a3a" fill-opacity="0.56"/>
<rect x="486.98" y="121.5" width="0.5" height="36.8" fill="#0a3030" fill-opacity="0.07"/>
<rect x="491.75" y="118.2" width="0.7" height="37.5" fill="#063a3a" fill-opacity="0.34"/>
<rect x="490.20" y="122.2" width="0.5" height="29.5" fill="#0a3030" fill-opacity="0.08"/>
<rect x="494.97" y="117.7" width="0.7" height="40.2" fill="#063a3a" fill-opacity="0.33"/>
<rect x="493.42" y="121.7" width="0.5" height="32.2" fill="#0a3030" fill-opacity="0.07"/>
<rect x="498.19" y="117.5" width="0.7" height="39.2" fill="#063a3a" fill-opacity="0.60"/>
<rect x="496.65" y="121.5" width="0.5" height="31.2" fill="#0a3030" fill-opacity="0.04"/>
<rect x="501.41" y="116.6" width="0.7" height="46.0" fill="#063a3a" fill-opacity="0.66"/>
<rect x="499.87" y="120.6" width="0.5" height="38.0" fill="#0a3030" fill-opacity="0.02"/>
<rect x="504.63" y="117.5" width="0.7" height="37.5" fill="#063a3a" fill-opacity="0.41"/>
<rect x="503.09" y="121.5" width="0.5" height="29.5" fill="#0a3030" fill-opacity="0.02"/>
<rect x="507.85" y="116.2" width="0.7" height="43.2" fill="#063a3a" fill-opacity="0.45"/>
<rect x="506.31" y="120.2" width="0.5" height="35.2" fill="#0a3030" fill-opacity="0.03"/>
<rect x="511.07" y="116.3" width="0.7" height="44.3" fill="#063a3a" fill-opacity="0.50"/>
<rect x="509.53" y="120.3" width="0.5" height="36.3" fill="#0a3030" fill-opacity="0.06"/>
<rect x="514.30" y="117.6" width="0.7" height="40.8" fill="#063a3a" fill-opacity="0.45"/>
<rect x="512.75" y="121.6" width="0.5" height="32.8" fill="#0a3030" fill-opacity="0.09"/>
<rect x="517.52" y="117.6" width="0.7" height="39.2" fill="#063a3a" fill-opacity="0.26"/>
<rect x="515.97" y="121.6" width="0.5" height="31.2" fill="#0a3030" fill-opacity="0.11"/>
<rect x="520.74" y="118.6" width="0.7" height="43.7" fill="#063a3a" fill-opacity="0.33"/>
<rect x="519.19" y="122.6" width="0.5" height="35.7" fill="#0a3030" fill-opacity="0.11"/>
<rect x="523.96" y="116.9" width="0.7" height="47.1" fill="#063a3a" fill-opacity="0.36"/>
<rect x="522.41" y="120.9" width="0.5" height="39.1" fill="#0a3030" fill-opacity="0.08"/>
<rect x="527.18" y="117.3" width="0.7" height="38.6" fill="#063a3a" fill-opacity="0.26"/>
<rect x="525.63" y="121.3" width="0.5" height="30.6" fill="#0a3030" fill-opacity="0.02"/>
<rect x="530.40" y="117.8" width="0.7" height="43.5" fill="#063a3a" fill-opacity="0.24"/>
<rect x="528.85" y="121.8" width="0.5" height="35.5" fill="#0a3030" fill-opacity="0.08"/>
<rect x="533.62" y="117.0" width="0.7" height="39.5" fill="#063a3a" fill-opacity="0.45"/>
<rect x="532.07" y="121.0" width="0.5" height="31.5" fill="#0a3030" fill-opacity="0.14"/>
<rect x="536.84" y="116.8" width="0.7" height="39.6" fill="#063a3a" fill-opacity="0.56"/>
<rect x="535.30" y="120.8" width="0.5" height="31.6" fill="#0a3030" fill-opacity="0.18"/>
<rect x="540.06" y="117.4" width="0.7" height="41.4" fill="#063a3a" fill-opacity="0.49"/>
<rect x="538.52" y="121.4" width="0.5" height="33.4" fill="#0a3030" fill-opacity="0.17"/>
<rect x="543.28" y="117.9" width="0.7" height="38.6" fill="#063a3a" fill-opacity="0.29"/>
<rect x="541.74" y="121.9" width="0.5" height="30.6" fill="#0a3030" fill-opacity="0.13"/>
<rect x="546.50" y="117.5" width="0.7" height="43.8" fill="#063a3a" fill-opacity="0.57"/>
<rect x="544.96" y="121.5" width="0.5" height="35.8" fill="#0a3030" fill-opacity="0.07"/>
<rect x="549.72" y="118.0" width="0.7" height="45.6" fill="#063a3a" fill-opacity="0.71"/>
<rect x="548.18" y="122.0" width="0.5" height="37.6" fill="#0a3030" fill-opacity="0.04"/>
<rect x="552.95" y="117.9" width="0.7" height="43.5" fill="#063a3a" fill-opacity="0.46"/>
<rect x="551.40" y="121.9" width="0.5" height="35.5" fill="#0a3030" fill-opacity="0.10"/>
<rect x="556.17" y="116.6" width="0.7" height="38.1" fill="#063a3a" fill-opacity="0.30"/>
<rect x="554.62" y="120.6" width="0.5" height="30.1" fill="#0a3030" fill-opacity="0.14"/>
<rect x="559.39" y="117.9" width="0.7" height="42.7" fill="#063a3a" fill-opacity="0.56"/>
<rect x="557.84" y="121.9" width="0.5" height="34.7" fill="#0a3030" fill-opacity="0.14"/>
<rect x="562.61" y="117.0" width="0.7" height="39.2" fill="#063a3a" fill-opacity="0.38"/>
<rect x="561.06" y="121.0" width="0.5" height="31.2" fill="#0a3030" fill-opacity="0.11"/>
<rect x="565.83" y="118.6" width="0.7" height="38.9" fill="#063a3a" fill-opacity="0.29"/>
<rect x="564.28" y="122.6" width="0.5" height="30.9" fill="#0a3030" fill-opacity="0.07"/>
<rect x="569.05" y="116.6" width="0.7" height="41.4" fill="#063a3a" fill-opacity="0.19"/>
<rect x="567.50" y="120.6" width="0.5" height="33.4" fill="#0a3030" fill-opacity="0.03"/>
<rect x="572.27" y="118.1" width="0.7" height="40.8" fill="#063a3a" fill-opacity="0.35"/>
<rect x="570.72" y="122.1" width="0.5" height="32.8" fill="#0a3030" fill-opacity="0.03"/>
<rect x="575.49" y="116.4" width="0.7" height="39.7" fill="#063a3a" fill-opacity="0.28"/>
<rect x="573.95" y="120.4" width="0.5" height="31.7" fill="#0a3030" fill-opacity="0.04"/>
<rect x="578.71" y="117.3" width="0.7" height="46.7" fill="#063a3a" fill-opacity="0.30"/>
<rect x="577.17" y="121.3" width="0.5" height="38.7" fill="#0a3030" fill-opacity="0.03"/>
<rect x="581.93" y="118.1" width="0.7" height="41.0" fill="#063a3a" fill-opacity="0.50"/>
<rect x="580.39" y="122.1" width="0.5" height="33.0" fill="#0a3030" fill-opacity="0.03"/>
<rect x="585.15" y="116.4" width="0.7" height="39.2" fill="#063a3a" fill-opacity="0.63"/>
<rect x="583.61" y="120.4" width="0.5" height="31.2" fill="#0a3030" fill-opacity="0.05"/>
<rect x="588.37" y="117.4" width="0.7" height="39.2" fill="#063a3a" fill-opacity="0.50"/>
<rect x="586.83" y="121.4" width="0.5" height="31.2" fill="#0a3030" fill-opacity="0.05"/>
<rect x="591.60" y="116.2" width="0.7" height="47.1" fill="#063a3a" fill-opacity="0.25"/>
<rect x="590.05" y="120.2" width="0.5" height="39.1" fill="#0a3030" fill-opacity="0.02"/>
<rect x="594.82" y="118.5" width="0.7" height="45.5" fill="#063a3a" fill-opacity="0.61"/>
<rect x="593.27" y="122.5" width="0.5" height="37.5" fill="#0a3030" fill-opacity="0.06"/>
<rect x="598.04" y="117.9" width="0.7" height="40.3" fill="#063a3a" fill-opacity="0.63"/>
<rect x="596.49" y="121.9" width="0.5" height="32.3" fill="#0a3030" fill-opacity="0.10"/>
<rect x="601.26" y="118.2" width="0.7" height="37.7" fill="#063a3a" fill-opacity="0.49"/>
<rect x="599.71" y="122.2" width="0.5" height="29.7" fill="#0a3030" fill-opacity="0.14"/>
<rect x="604.48" y="116.6" width="0.7" height="43.5" fill="#063a3a" fill-opacity="0.26"/>
<rect x="602.93" y="120.6" width="0.5" height="35.5" fill="#0a3030" fill-opacity="0.15"/>
<rect x="607.70" y="116.1" width="0.7" height="46.4" fill="#063a3a" fill-opacity="0.47"/>
<rect x="606.15" y="120.1" width="0.5" height="38.4" fill="#0a3030" fill-opacity="0.13"/>
<rect x="610.92" y="117.3" width="0.7" height="37.8" fill="#063a3a" fill-opacity="0.48"/>
<rect x="609.37" y="121.3" width="0.5" height="29.8" fill="#0a3030" fill-opacity="0.07"/>
<rect x="614.14" y="117.4" width="0.7" height="37.8" fill="#063a3a" fill-opacity="0.35"/>
<rect x="612.60" y="121.4" width="0.5" height="29.8" fill="#0a3030" fill-opacity="0.04"/>
<rect x="617.36" y="117.7" width="0.7" height="45.4" fill="#063a3a" fill-opacity="0.23"/>
<rect x="615.82" y="121.7" width="0.5" height="37.4" fill="#0a3030" fill-opacity="0.11"/>
<rect x="620.58" y="117.7" width="0.7" height="38.9" fill="#063a3a" fill-opacity="0.29"/>
<rect x="619.04" y="121.7" width="0.5" height="30.9" fill="#0a3030" fill-opacity="0.16"/>
<rect x="623.80" y="118.4" width="0.7" height="39.9" fill="#063a3a" fill-opacity="0.32"/>
<rect x="622.26" y="122.4" width="0.5" height="31.9" fill="#0a3030" fill-opacity="0.18"/>
<rect x="627.02" y="117.6" width="0.7" height="38.2" fill="#063a3a" fill-opacity="0.22"/>
<rect x="625.48" y="121.6" width="0.5" height="30.2" fill="#0a3030" fill-opacity="0.16"/>
<rect x="630.25" y="117.3" width="0.7" height="42.9" fill="#063a3a" fill-opacity="0.37"/>
<rect x="628.70" y="121.3" width="0.5" height="34.9" fill="#0a3030" fill-opacity="0.11"/>
<rect x="633.47" y="117.9" width="0.7" height="40.9" fill="#063a3a" fill-opacity="0.60"/>
<rect x="631.92" y="121.9" width="0.5" height="32.9" fill="#0a3030" fill-opacity="0.05"/>
<rect x="636.69" y="117.9" width="0.7" height="37.2" fill="#063a3a" fill-opacity="0.46"/>
<rect x="635.14" y="121.9" width="0.5" height="29.2" fill="#0a3030" fill-opacity="0.05"/>
<rect x="639.91" y="117.1" width="0.7" height="43.9" fill="#063a3a" fill-opacity="0.24"/>
<rect x="638.36" y="121.1" width="0.5" height="35.9" fill="#0a3030" fill-opacity="0.09"/>
<rect x="643.13" y="116.7" width="0.7" height="44.1" fill="#063a3a" fill-opacity="0.58"/>
<rect x="641.58" y="120.7" width="0.5" height="36.1" fill="#0a3030" fill-opacity="0.10"/>
<rect x="646.35" y="117.3" width="0.7" height="38.7" fill="#063a3a" fill-opacity="0.68"/>
<rect x="644.80" y="121.3" width="0.5" height="30.7" fill="#0a3030" fill-opacity="0.09"/>
<rect x="649.57" y="117.6" width="0.7" height="37.6" fill="#063a3a" fill-opacity="0.54"/>
<rect x="648.02" y="121.6" width="0.5" height="29.6" fill="#0a3030" fill-opacity="0.06"/>
<rect x="652.79" y="118.6" width="0.7" height="38.2" fill="#063a3a" fill-opacity="0.26"/>
<rect x="651.25" y="122.6" width="0.5" height="30.2" fill="#0a3030" fill-opacity="0.04"/>
<rect x="656.01" y="118.1" width="0.7" height="44.4" fill="#063a3a" fill-opacity="0.45"/>
<rect x="654.47" y="122.1" width="0.5" height="36.4" fill="#0a3030" fill-opacity="0.02"/>
<rect x="659.23" y="118.0" width="0.7" height="37.0" fill="#063a3a" fill-opacity="0.46"/>
<rect x="657.69" y="122.0" width="0.5" height="29.0" fill="#0a3030" fill-opacity="0.02"/>
<rect x="662.45" y="118.6" width="0.7" height="43.7" fill="#063a3a" fill-opacity="0.23"/>
<rect x="660.91" y="122.6" width="0.5" height="35.7" fill="#0a3030" fill-opacity="0.04"/>
<rect x="665.67" y="116.2" width="0.7" height="40.7" fill="#063a3a" fill-opacity="0.18"/>
<rect x="664.13" y="120.2" width="0.5" height="32.7" fill="#0a3030" fill-opacity="0.07"/>
<rect x="668.90" y="116.7" width="0.7" height="44.3" fill="#063a3a" fill-opacity="0.36"/>
<rect x="667.35" y="120.7" width="0.5" height="36.3" fill="#0a3030" fill-opacity="0.09"/>
<rect x="672.12" y="117.7" width="0.7" height="45.6" fill="#063a3a" fill-opacity="0.44"/>
<rect x="670.57" y="121.7" width="0.5" height="37.6" fill="#0a3030" fill-opacity="0.09"/>
<rect x="675.34" y="116.5" width="0.7" height="38.3" fill="#063a3a" fill-opacity="0.27"/>
<rect x="673.79" y="120.5" width="0.5" height="30.3" fill="#0a3030" fill-opacity="0.06"/>
<rect x="678.56" y="116.4" width="0.7" height="47.5" fill="#063a3a" fill-opacity="0.43"/>
<rect x="677.01" y="120.4" width="0.5" height="39.5" fill="#0a3030" fill-opacity="0.03"/>
<rect x="681.78" y="116.6" width="0.7" height="45.7" fill="#063a3a" fill-opacity="0.61"/>
<rect x="680.23" y="120.6" width="0.5" height="37.7" fill="#0a3030" fill-opacity="0.09"/>
<rect x="685.00" y="117.4" width="0.7" height="38.2" fill="#063a3a" fill-opacity="0.50"/>
<rect x="683.45" y="121.4" width="0.5" height="30.2" fill="#0a3030" fill-opacity="0.14"/>
<rect x="688.22" y="118.3" width="0.7" height="45.0" fill="#063a3a" fill-opacity="0.34"/>
<rect x="686.67" y="122.3" width="0.5" height="37.0" fill="#0a3030" fill-opacity="0.17"/>
<rect x="691.44" y="118.2" width="0.7" height="41.7" fill="#063a3a" fill-opacity="0.43"/>
<rect x="689.90" y="122.2" width="0.5" height="33.7" fill="#0a3030" fill-opacity="0.16"/>
<rect x="694.66" y="117.4" width="0.7" height="43.1" fill="#063a3a" fill-opacity="0.70"/>
<rect x="693.12" y="121.4" width="0.5" height="35.1" fill="#0a3030" fill-opacity="0.12"/>
<rect x="697.88" y="118.1" width="0.7" height="37.2" fill="#063a3a" fill-opacity="0.52"/>
<rect x="696.34" y="122.1" width="0.5" height="29.2" fill="#0a3030" fill-opacity="0.06"/>
<rect x="701.10" y="117.5" width="0.7" height="39.9" fill="#063a3a" fill-opacity="0.19"/>
<rect x="699.56" y="121.5" width="0.5" height="31.9" fill="#0a3030" fill-opacity="0.06"/>
<rect x="704.32" y="116.1" width="0.7" height="45.6" fill="#063a3a" fill-opacity="0.43"/>
<rect x="702.78" y="120.1" width="0.5" height="37.6" fill="#0a3030" fill-opacity="0.12"/>
<rect x="707.55" y="118.2" width="0.7" height="44.1" fill="#063a3a" fill-opacity="0.36"/>
<rect x="706.00" y="122.2" width="0.5" height="36.1" fill="#0a3030" fill-opacity="0.15"/>
<rect x="710.77" y="116.4" width="0.7" height="44.4" fill="#063a3a" fill-opacity="0.30"/>
<rect x="709.22" y="120.4" width="0.5" height="36.4" fill="#0a3030" fill-opacity="0.15"/>
<rect x="713.99" y="117.2" width="0.7" height="38.5" fill="#063a3a" fill-opacity="0.20"/>
<rect x="712.44" y="121.2" width="0.5" height="30.5" fill="#0a3030" fill-opacity="0.13"/>
<rect x="717.21" y="117.5" width="0.7" height="40.5" fill="#063a3a" fill-opacity="0.37"/>
<rect x="715.66" y="121.5" width="0.5" height="32.5" fill="#0a3030" fill-opacity="0.08"/>
<rect x="720.43" y="117.9" width="0.7" height="44.8" fill="#063a3a" fill-opacity="0.31"/>
<rect x="718.88" y="121.9" width="0.5" height="36.8" fill="#0a3030" fill-opacity="0.03"/>
<rect x="723.65" y="116.4" width="0.7" height="41.7" fill="#063a3a" fill-opacity="0.39"/>
<rect x="722.10" y="120.4" width="0.5" height="33.7" fill="#0a3030" fill-opacity="0.05"/>
<rect x="726.87" y="118.0" width="0.7" height="38.0" fill="#063a3a" fill-opacity="0.33"/>
<rect x="725.32" y="122.0" width="0.5" height="30.0" fill="#0a3030" fill-opacity="0.06"/>
<rect x="730.09" y="118.6" width="0.7" height="43.4" fill="#063a3a" fill-opacity="0.59"/>
<rect x="728.55" y="122.6" width="0.5" height="35.4" fill="#0a3030" fill-opacity="0.05"/>
<rect x="733.31" y="116.3" width="0.7" height="39.4" fill="#063a3a" fill-opacity="0.50"/>
<rect x="731.77" y="120.3" width="0.5" height="31.4" fill="#0a3030" fill-opacity="0.04"/>
<rect x="736.53" y="117.6" width="0.7" height="41.9" fill="#063a3a" fill-opacity="0.37"/>
<rect x="734.99" y="121.6" width="0.5" height="33.9" fill="#0a3030" fill-opacity="0.02"/>
<rect x="739.75" y="117.1" width="0.7" height="43.3" fill="#063a3a" fill-opacity="0.47"/>
<rect x="738.21" y="121.1" width="0.5" height="35.3" fill="#0a3030" fill-opacity="0.03"/>
<rect x="742.97" y="118.4" width="0.7" height="43.2" fill="#063a3a" fill-opacity="0.67"/>
<rect x="741.43" y="122.4" width="0.5" height="35.2" fill="#0a3030" fill-opacity="0.02"/>
<rect x="746.20" y="118.4" width="0.7" height="44.2" fill="#063a3a" fill-opacity="0.58"/>
<rect x="744.65" y="122.4" width="0.5" height="36.2" fill="#0a3030" fill-opacity="0.05"/>
<rect x="749.42" y="116.2" width="0.7" height="44.9" fill="#063a3a" fill-opacity="0.29"/>
<rect x="747.87" y="120.2" width="0.5" height="36.9" fill="#0a3030" fill-opacity="0.09"/>
<rect x="752.64" y="117.2" width="0.7" height="45.8" fill="#063a3a" fill-opacity="0.48"/>
<rect x="751.09" y="121.2" width="0.5" height="37.8" fill="#0a3030" fill-opacity="0.12"/>
<rect x="755.86" y="118.5" width="0.7" height="40.3" fill="#063a3a" fill-opacity="0.38"/>
<rect x="754.31" y="122.5" width="0.5" height="32.3" fill="#0a3030" fill-opacity="0.13"/>
<rect x="759.08" y="116.7" width="0.7" height="40.7" fill="#063a3a" fill-opacity="0.35"/>
<rect x="757.53" y="120.7" width="0.5" height="32.7" fill="#0a3030" fill-opacity="0.11"/>
<rect x="762.30" y="116.9" width="0.7" height="38.6" fill="#063a3a" fill-opacity="0.22"/>
<rect x="760.75" y="120.9" width="0.5" height="30.6" fill="#0a3030" fill-opacity="0.06"/>
<rect x="765.52" y="118.6" width="0.7" height="42.3" fill="#063a3a" fill-opacity="0.28"/>
<rect x="763.97" y="122.6" width="0.5" height="34.3" fill="#0a3030" fill-opacity="0.05"/>
<rect x="768.74" y="118.0" width="0.7" height="44.5" fill="#063a3a" fill-opacity="0.45"/>
<rect x="767.20" y="122.0" width="0.5" height="36.5" fill="#0a3030" fill-opacity="0.12"/>
<path d="M401 171.6 H419" stroke="#2a2a2a" stroke-width="1"/>
<rect x="398.3" y="180.6" width="23" height="23" rx="3" fill="#0c0c0c" fill-opacity="0.25" stroke="#2c2c2c" stroke-width="1"/>
<rect x="398.3" y="212.6" width="23" height="23" rx="3" fill="#0c0c0c" fill-opacity="0.25" stroke="#2c2c2c" stroke-width="1"/>
<rect x="398.3" y="244.6" width="23" height="23" rx="3" fill="#0c0c0c" fill-opacity="0.25" stroke="#2c2c2c" stroke-width="1"/>
<rect x="398.3" y="276.8" width="23" height="23" rx="3" fill="#0c0c0c" fill-opacity="0.25" stroke="#2c2c2c" stroke-width="1"/>
<path d="M403 192.2 H416.6 M409.8 185.4 V199" stroke="#3c3c3c" stroke-width="1.7"/>
<path d="M403 224.2 H416.6" stroke="#3c3c3c" stroke-width="1.7"/>
<path d="M401.6 252 L407.4 256.2 L401.6 260.4 Z M418 252 L412.2 256.2 L418 260.4 Z" fill="#363636"/>
<path d="M409.8 250 V252 M409.8 255.2 V257.2 M409.8 260.4 V262.4" stroke="#363636" stroke-width="1.2"/>
<path d="M403.4 282 H416.2 M403.4 295 H416.2 M409.8 282 V295" stroke="#383838" stroke-width="1.3"/>
<text class="c" x="367.6" y="409.7" font-size="12.2" fill="#fff" font-weight="normal" text-anchor="end" font-family='"DejaVu Sans", "Liberation Sans", sans-serif'>0</text>
<rect x="376.1" y="435.50" width="393.9" height="1.3" fill="#ffffff" fill-opacity="0.29"/>
<text class="c" x="367.6" y="441.1" font-size="12.2" fill="#fff" font-weight="normal" text-anchor="end" font-family='"DejaVu Sans", "Liberation Sans", sans-serif'>-20</text>
<rect x="376.1" y="466.85" width="393.9" height="1.3" fill="#ffffff" fill-opacity="0.29"/>
<text class="c" x="367.6" y="472.4" font-size="12.2" fill="#fff" font-weight="normal" text-anchor="end" font-family='"DejaVu Sans", "Liberation Sans", sans-serif'>-40</text>
<rect x="376.1" y="498.20" width="393.9" height="1.3" fill="#ffffff" fill-opacity="0.29"/>
<text class="c" x="367.6" y="503.8" font-size="12.2" fill="#fff" font-weight="normal" text-anchor="end" font-family='"DejaVu Sans", "Liberation Sans", sans-serif'>-60</text>
<rect x="376.1" y="529.55" width="393.9" height="1.3" fill="#ffffff" fill-opacity="0.29"/>
<text class="c" x="367.6" y="535.1" font-size="12.2" fill="#fff" font-weight="normal" text-anchor="end" font-family='"DejaVu Sans", "Liberation Sans", sans-serif'>-80</text>
<text class="c" x="367.6" y="566.4" font-size="12.2" fill="#fff" font-weight="normal" text-anchor="end" font-family='"DejaVu Sans", "Liberation Sans", sans-serif'>-100</text>
<text class="c" x="375.3" y="583.0" font-size="12.2" fill="#fff" font-weight="normal" text-anchor="middle" font-family='"DejaVu Sans", "Liberation Sans", sans-serif'>0</text>
<rect x="441.10" y="405.6" width="1.3" height="155.95" fill="#ffffff" fill-opacity="0.29"/>
<text class="c" x="442.9" y="583.0" font-size="12.2" fill="#fff" font-weight="normal" text-anchor="middle" font-family='"DejaVu Sans", "Liberation Sans", sans-serif'>500</text>
<rect x="506.75" y="405.6" width="1.3" height="155.95" fill="#ffffff" fill-opacity="0.29"/>
<text class="c" x="508.6" y="583.0" font-size="12.2" fill="#fff" font-weight="normal" text-anchor="middle" font-family='"DejaVu Sans", "Liberation Sans", sans-serif'>1000</text>
<rect x="572.40" y="405.6" width="1.3" height="155.95" fill="#ffffff" fill-opacity="0.29"/>
<text class="c" x="574.2" y="583.0" font-size="12.2" fill="#fff" font-weight="normal" text-anchor="middle" font-family='"DejaVu Sans", "Liberation Sans", sans-serif'>1500</text>
<rect x="638.05" y="405.6" width="1.3" height="155.95" fill="#ffffff" fill-opacity="0.29"/>
<text class="c" x="639.9" y="583.0" font-size="12.2" fill="#fff" font-weight="normal" text-anchor="middle" font-family='"DejaVu Sans", "Liberation Sans", sans-serif'>2000</text>
<rect x="703.70" y="405.6" width="1.3" height="155.95" fill="#ffffff" fill-opacity="0.29"/>
<text class="c" x="705.6" y="583.0" font-size="12.2" fill="#fff" font-weight="normal" text-anchor="middle" font-family='"DejaVu Sans", "Liberation Sans", sans-serif'>2500</text>
<text class="c" x="772.2" y="583.0" font-size="12.2" fill="#fff" font-weight="normal" text-anchor="middle" font-family='"DejaVu Sans", "Liberation Sans", sans-serif'>3000</text>
<text class="c" x="546.3" y="396.2" font-size="12.2" fill="#fff" font-weight="normal" text-anchor="middle" font-family='"DejaVu Sans", "Liberation Sans", sans-serif' textLength="45.6" lengthAdjust="spacingAndGlyphs">Спектр</text>
<text class="c" x="573" y="595.6" font-size="12.2" fill="#fff" font-weight="normal" text-anchor="middle" font-family='"DejaVu Sans", "Liberation Sans", sans-serif' textLength="77" lengthAdjust="spacingAndGlyphs">Частота [Гц]</text>
<text class="c" transform="translate(330.4 483.1) rotate(-90)" font-size="12.2" fill="#fff" text-anchor="middle" font-family='"DejaVu Sans", "Liberation Sans", sans-serif' textLength="97" lengthAdjust="spacingAndGlyphs">Амплитуда [дБ]</text>
<rect x="390.6" y="418.2" width="23" height="23" rx="3" fill="#0c0c0c" fill-opacity="0.25" stroke="#202020" stroke-width="1"/>
<rect x="390.6" y="450.9" width="23" height="23" rx="3" fill="#0c0c0c" fill-opacity="0.25" stroke="#202020" stroke-width="1"/>
<rect x="390.6" y="482.6" width="23" height="23" rx="3" fill="#0c0c0c" fill-opacity="0.25" stroke="#202020" stroke-width="1"/>
<rect x="390.6" y="514.3" width="23" height="23" rx="3" fill="#0c0c0c" fill-opacity="0.25" stroke="#202020" stroke-width="1"/>
<rect x="390.6" y="545.9" width="23" height="23" rx="3" fill="#0c0c0c" fill-opacity="0.25" stroke="#202020" stroke-width="1"/>
<path d="M394.5 428.5 L398 433.5 L403.5 421.5" fill="none" stroke="#303030" stroke-width="1.5"/>
<rect x="408" y="422" width="1.2" height="1.2" fill="#2c2c2c"/>
<rect x="411" y="424" width="1.2" height="1.2" fill="#2c2c2c"/>
<rect x="411" y="428" width="1.2" height="1.2" fill="#2c2c2c"/>
<rect x="411" y="432" width="1.2" height="1.2" fill="#2c2c2c"/>
<rect x="411" y="436" width="1.2" height="1.2" fill="#2c2c2c"/>
<rect x="407" y="437" width="1.2" height="1.2" fill="#2c2c2c"/>
<rect x="402" y="437" width="1.2" height="1.2" fill="#2c2c2c"/>
<rect x="397" y="437" width="1.2" height="1.2" fill="#2c2c2c"/>
<path d="M396 471 V457.5 L399 455 L402 458.5 L405 455.5 L408 455 V471" fill="none" stroke="#2e2e2e" stroke-width="1.2"/>
<path d="M376.10,561.55 L376.10,521.42 L376.36,518.23 L376.63,520.12 L376.89,523.64 L377.15,524.03 L377.41,522.52 L377.68,522.46 L377.94,524.51 L378.20,522.40 L378.46,517.22 L378.73,519.23 L378.99,510.05 L379.07,511.08 L379.25,516.91 L379.51,522.36 L379.78,523.27 L380.04,526.00 L380.30,530.67 L380.56,525.51 L380.83,523.70 L381.09,523.04 L381.35,520.80 L381.61,520.39 L381.88,512.28 L382.01,512.96 L382.14,509.37 L382.36,499.79 L382.40,500.25 L382.67,510.98 L382.80,514.52 L382.93,515.84 L383.19,516.02 L383.45,524.70 L383.72,525.28 L383.98,528.63 L384.24,525.64 L384.50,524.45 L384.77,519.73 L385.03,520.80 L385.29,519.55 L385.55,514.18 L385.68,516.09 L385.82,512.12 L386.08,508.10 L386.34,509.66 L386.60,517.66 L386.87,521.83 L387.13,522.33 L387.39,523.16 L387.52,522.36 L387.65,518.77 L387.92,523.37 L388.18,520.10 L388.44,515.39 L388.57,516.09 L388.70,512.21 L388.97,516.80 L389.23,513.98 L389.49,511.24 L389.58,512.17 L389.76,509.16 L390.02,506.17 L390.28,503.50 L390.54,504.37 L390.61,501.99 L390.81,495.60 L391.07,486.31 L391.33,466.99 L391.53,451.35 L391.59,451.95 L391.86,456.07 L391.92,456.53 L392.12,476.61 L392.25,489.45 L392.38,494.29 L392.64,505.90 L392.91,507.47 L393.17,510.38 L393.43,512.49 L393.69,515.44 L393.92,518.29 L393.96,516.64 L394.22,517.33 L394.48,516.97 L394.61,512.96 L394.74,513.20 L395.01,508.08 L395.14,501.99 L395.27,507.12 L395.53,514.52 L395.80,519.11 L396.06,521.44 L396.32,520.93 L396.39,521.42 L396.58,517.66 L396.85,518.90 L397.11,521.06 L397.37,516.94 L397.50,518.44 L397.63,520.87 L397.90,521.81 L398.16,520.82 L398.42,520.50 L398.68,518.97 L398.81,520.48 L398.95,520.31 L399.21,517.26 L399.47,520.53 L399.73,513.66 L399.87,516.09 L400.00,516.40 L400.26,511.45 L400.52,512.17 L400.78,517.61 L401.05,514.30 L401.18,517.66 L401.31,519.71 L401.57,515.70 L401.83,516.38 L402.10,517.62 L402.36,520.66 L402.57,519.38 L402.62,522.61 L402.89,520.58 L403.15,514.87 L403.41,519.23 L403.67,516.09 L403.94,514.46 L404.20,514.42 L404.46,513.37 L404.59,514.21 L404.72,515.67 L404.99,514.44 L405.25,513.27 L405.51,505.67 L405.64,508.25 L405.77,507.81 L406.04,503.44 L406.30,501.99 L406.56,494.05 L406.82,486.31 L407.09,470.23 L407.35,453.39 L407.61,457.13 L407.74,458.10 L407.87,471.93 L408.07,491.01 L408.14,493.59 L408.35,503.87 L408.40,506.77 L408.66,502.79 L408.93,508.70 L409.19,507.99 L409.45,513.78 L409.58,512.17 L409.71,510.34 L409.98,514.36 L410.24,513.88 L410.50,513.11 L410.76,516.26 L410.89,513.74 L411.03,515.63 L411.29,512.17 L411.55,516.01 L411.81,515.66 L412.08,513.33 L412.21,515.31 L412.34,517.28 L412.60,517.63 L412.86,517.60 L413.13,516.61 L413.39,516.88 L413.65,516.09 L413.91,513.62 L414.18,513.29 L414.44,509.05 L414.53,511.08 L414.70,516.17 L414.96,515.00 L415.10,517.66 L415.23,515.92 L415.49,521.23 L415.75,523.81 L416.02,522.15 L416.28,525.53 L416.41,523.46 L416.54,523.21 L416.80,520.41 L417.07,523.62 L417.33,522.39 L417.46,519.23 L417.59,519.51 L417.85,521.90 L418.12,521.78 L418.38,520.61 L418.64,520.48 L418.90,522.24 L419.17,521.71 L419.43,518.81 L419.69,517.18 L419.95,516.09 L420.22,512.21 L420.48,513.97 L420.74,516.44 L421.00,514.52 L421.14,512.17 L421.27,509.36 L421.53,508.34 L421.79,503.96 L422.06,501.06 L422.32,501.99 L422.58,493.43 L422.78,487.88 L422.84,485.32 L423.11,471.79 L423.30,463.11 L423.37,463.81 L423.63,467.13 L423.70,467.50 L423.89,483.00 L424.02,492.58 L424.16,495.84 L424.42,503.87 L424.68,507.82 L424.94,510.67 L425.21,511.38 L425.47,508.80 L425.73,513.96 L425.99,514.06 L426.07,516.25 L426.26,519.75 L426.52,517.96 L426.78,519.70 L427.04,521.29 L427.31,518.95 L427.57,521.85 L427.83,524.33 L428.09,522.52 L428.36,519.32 L428.62,522.92 L428.88,525.14 L429.15,526.45 L429.28,523.15 L429.41,521.55 L429.67,521.43 L429.93,523.74 L430.20,519.38 L430.46,521.72 L430.72,521.99 L430.85,524.71 L430.98,524.85 L431.25,527.72 L431.51,526.68 L431.77,526.73 L431.85,527.69 L432.03,526.56 L432.30,529.91 L432.56,525.24 L432.82,524.13 L433.08,527.07 L433.35,525.97 L433.61,525.72 L433.87,529.66 L434.13,526.53 L434.33,529.73 L434.40,531.77 L434.66,530.83 L434.92,527.64 L435.19,524.92 L435.45,527.07 L435.71,528.65 L435.97,526.42 L436.24,526.37 L436.37,522.52 L436.50,521.39 L436.76,520.36 L437.02,516.91 L437.29,509.97 L437.42,510.14 L437.55,505.96 L437.81,496.29 L437.94,495.72 L438.07,492.48 L438.34,485.36 L438.47,482.23 L438.60,484.27 L438.86,486.31 L439.12,497.85 L439.26,508.25 L439.39,513.44 L439.65,518.29 L439.91,521.58 L440.17,524.48 L440.44,524.60 L440.52,528.63 L440.70,529.39 L440.96,526.96 L441.22,530.53 L441.49,534.33 L441.75,531.08 L442.01,536.45 L442.14,534.90 L442.28,531.63 L442.54,535.72 L442.80,537.66 L443.06,532.94 L443.33,536.47 L443.59,538.61 L443.85,538.93 L444.11,540.28 L444.38,538.94 L444.64,541.02 L444.90,544.18 L445.16,541.63 L445.43,542.97 L445.69,538.25 L445.95,540.39 L446.21,544.37 L446.48,540.71 L446.74,543.66 L447.00,542.84 L447.26,543.05 L447.53,542.55 L447.79,541.44 L448.05,545.32 L448.31,542.74 L448.58,545.39 L448.84,547.08 L449.10,542.15 L449.37,546.19 L449.63,548.73 L449.89,548.93 L450.15,546.39 L450.42,546.66 L450.68,546.76 L450.94,545.33 L451.20,551.71 L451.47,549.32 L451.73,551.05 L451.99,551.41 L452.25,549.01 L452.52,549.46 L452.78,551.43 L453.04,552.14 L453.30,550.42 L453.57,547.44 L453.83,539.10 L453.91,540.08 L454.09,542.52 L454.29,547.44 L454.35,545.81 L454.62,548.55 L454.75,553.40 L454.88,555.15 L455.14,550.82 L455.41,554.82 L455.67,554.50 L455.93,558.44 L456.19,553.34 L456.46,559.78 L456.59,557.47 L456.72,560.82 L456.98,558.99 L457.24,559.04 L457.51,557.63 L457.77,554.88 L458.03,556.01 L458.29,559.59 L458.56,559.30 L458.65,559.67 L458.82,557.32 L459.08,557.69 L459.34,558.84 L459.61,559.98 L459.87,560.21 L460.13,560.61 L460.39,560.92 L460.66,561.24 L460.92,561.29 L461.18,561.35 L461.45,561.41 L461.71,561.46 L461.97,561.52 L462.10,561.55 L462.23,561.55 L462.50,561.55 L462.76,561.55 L770.00,561.55 Z" fill="#b6ffff" stroke="#b6ffff" stroke-width="0.7" stroke-linejoin="round"/>
<rect x="376.1" y="560.65" width="393.9" height="1.5" fill="#80cccc"/>
<rect x="390.6" y="450.9" width="23" height="23" rx="3" fill="#003030" fill-opacity="0.05" stroke="#005050" stroke-opacity="0.10" stroke-width="1"/>
<rect x="390.6" y="482.6" width="23" height="23" rx="3" fill="#003030" fill-opacity="0.05" stroke="#005050" stroke-opacity="0.10" stroke-width="1"/>
<rect x="390.6" y="514.3" width="23" height="23" rx="3" fill="#003030" fill-opacity="0.05" stroke="#005050" stroke-opacity="0.10" stroke-width="1"/>
<rect x="390.6" y="545.9" width="23" height="23" rx="3" fill="#003030" fill-opacity="0.05" stroke="#005050" stroke-opacity="0.10" stroke-width="1"/>
<path d="M396.5 494 H408 M402.2 488 V500" stroke="#2a4a4a" stroke-opacity="0.28" stroke-width="1.8"/>
<path d="M396.5 526 H408" stroke="#2a5a5a" stroke-opacity="0.12" stroke-width="1.8"/>
<rect x="791" y="621" width="1.6" height="1.6" fill="#4a4a4a"/>
<rect x="787" y="621" width="1.6" height="1.6" fill="#4a4a4a"/>
<rect x="783" y="621" width="1.6" height="1.6" fill="#4a4a4a"/>
<rect x="791" y="617" width="1.6" height="1.6" fill="#4a4a4a"/>
<rect x="787" y="617" width="1.6" height="1.6" fill="#4a4a4a"/>
<rect x="791" y="613" width="1.6" height="1.6" fill="#4a4a4a"/>
</svg>
</body></html>
